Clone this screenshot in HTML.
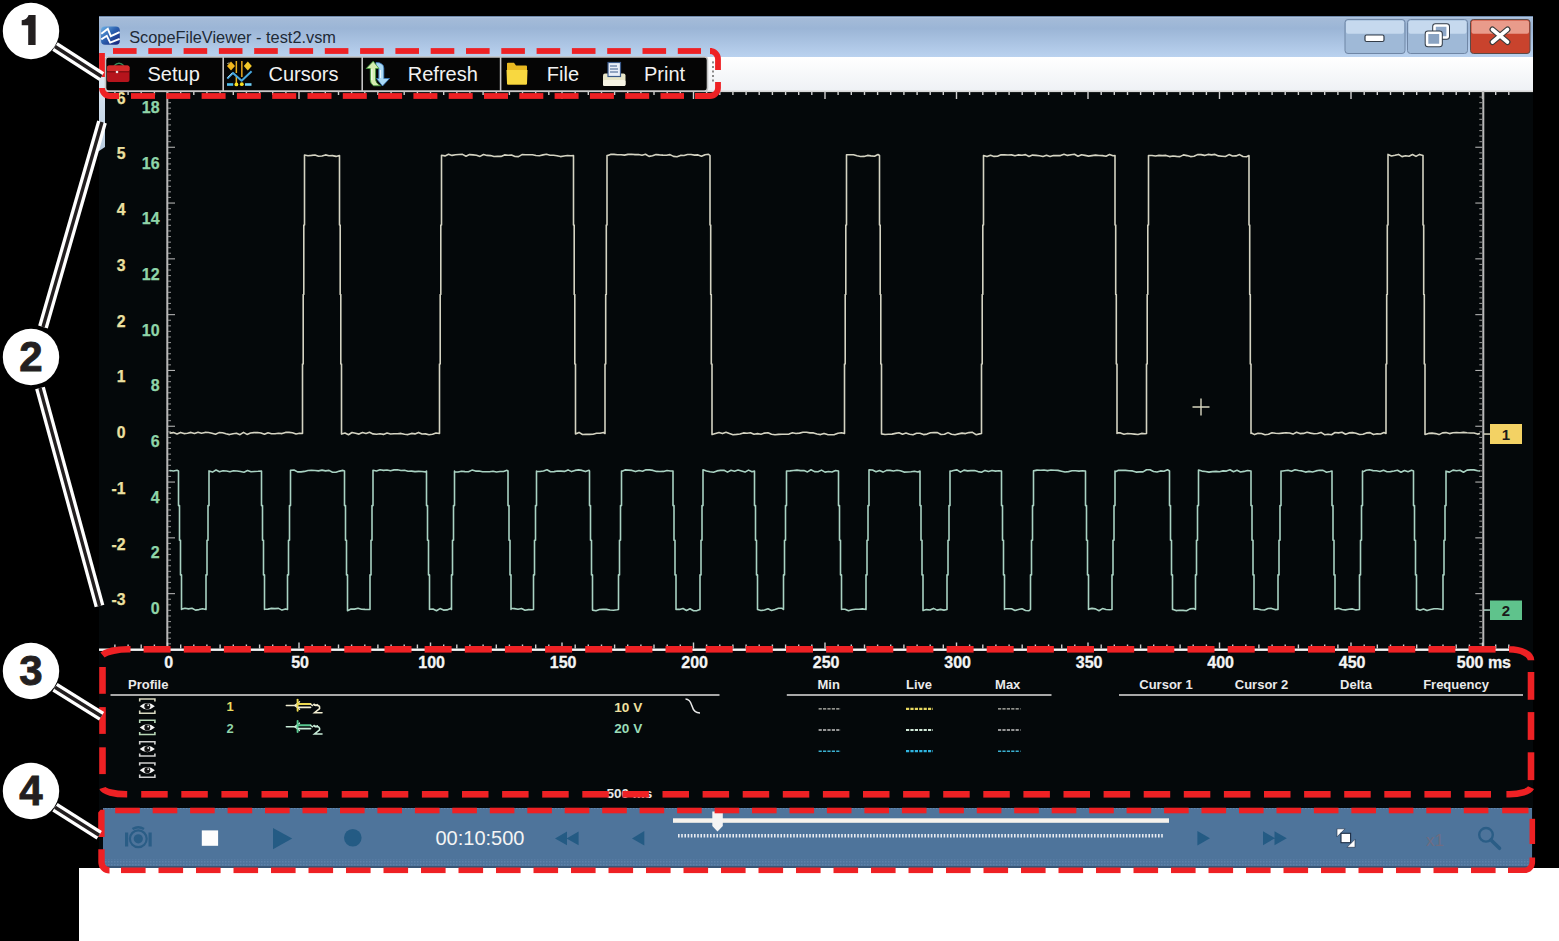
<!DOCTYPE html><html><head><meta charset="utf-8"><style>
html,body{margin:0;padding:0;background:#000;}
body{width:1559px;height:941px;position:relative;overflow:hidden;font-family:"Liberation Sans", sans-serif;}
.a{position:absolute;}
svg text{font-family:"Liberation Sans", sans-serif;}
</style></head><body>
<svg class="a" style="left:0;top:0" width="1559" height="941" viewBox="0 0 1559 941">
<defs>
<linearGradient id="tb" x1="0" y1="0" x2="0" y2="1"><stop offset="0" stop-color="#c2d4ea"/><stop offset="0.06" stop-color="#a4bbd8"/><stop offset="0.3" stop-color="#9bb5d6"/><stop offset="1" stop-color="#bad2ef"/></linearGradient>
<linearGradient id="ms" x1="0" y1="0" x2="0" y2="1"><stop offset="0" stop-color="#ffffff"/><stop offset="1" stop-color="#eef1f5"/></linearGradient>
<linearGradient id="lstrip" x1="0" y1="0" x2="0" y2="1"><stop offset="0" stop-color="#e8f0f8"/><stop offset="1" stop-color="#b8cce0"/></linearGradient>
</defs>
<rect x="0" y="0" width="1559" height="941" fill="#000"/>
<rect x="79" y="868" width="1480" height="73" fill="#fff"/>
<rect x="99" y="57" width="1434" height="811" fill="#04080a"/>
<rect x="99" y="16" width="1434" height="41" fill="url(#tb)"/>
<rect x="99" y="16" width="1434" height="1" fill="#6f89ab"/>
<rect x="99" y="57" width="1434" height="34" fill="url(#ms)"/>
<path d="M99,57 L105,57 L105,147 L99,151 Z" fill="url(#lstrip)"/>
<rect x="105" y="90.5" width="1428" height="1.6" fill="#d8d8d8"/>
<rect x="114.2" y="91" width="1.4" height="4" fill="#cfcfcf"/>
<rect x="127.4" y="91" width="1.4" height="4" fill="#cfcfcf"/>
<rect x="140.5" y="91" width="1.4" height="4" fill="#cfcfcf"/>
<rect x="153.7" y="91" width="1.4" height="4" fill="#cfcfcf"/>
<rect x="166.8" y="91" width="1.4" height="8" fill="#cfcfcf"/>
<rect x="180.0" y="91" width="1.4" height="4" fill="#cfcfcf"/>
<rect x="193.1" y="91" width="1.4" height="4" fill="#cfcfcf"/>
<rect x="206.2" y="91" width="1.4" height="4" fill="#cfcfcf"/>
<rect x="219.4" y="91" width="1.4" height="4" fill="#cfcfcf"/>
<rect x="232.6" y="91" width="1.4" height="4" fill="#cfcfcf"/>
<rect x="245.7" y="91" width="1.4" height="4" fill="#cfcfcf"/>
<rect x="258.9" y="91" width="1.4" height="4" fill="#cfcfcf"/>
<rect x="272.0" y="91" width="1.4" height="4" fill="#cfcfcf"/>
<rect x="285.2" y="91" width="1.4" height="4" fill="#cfcfcf"/>
<rect x="298.3" y="91" width="1.4" height="8" fill="#cfcfcf"/>
<rect x="311.4" y="91" width="1.4" height="4" fill="#cfcfcf"/>
<rect x="324.6" y="91" width="1.4" height="4" fill="#cfcfcf"/>
<rect x="337.8" y="91" width="1.4" height="4" fill="#cfcfcf"/>
<rect x="350.9" y="91" width="1.4" height="4" fill="#cfcfcf"/>
<rect x="364.1" y="91" width="1.4" height="4" fill="#cfcfcf"/>
<rect x="377.2" y="91" width="1.4" height="4" fill="#cfcfcf"/>
<rect x="390.4" y="91" width="1.4" height="4" fill="#cfcfcf"/>
<rect x="403.5" y="91" width="1.4" height="4" fill="#cfcfcf"/>
<rect x="416.7" y="91" width="1.4" height="4" fill="#cfcfcf"/>
<rect x="429.8" y="91" width="1.4" height="8" fill="#cfcfcf"/>
<rect x="443.0" y="91" width="1.4" height="4" fill="#cfcfcf"/>
<rect x="456.1" y="91" width="1.4" height="4" fill="#cfcfcf"/>
<rect x="469.2" y="91" width="1.4" height="4" fill="#cfcfcf"/>
<rect x="482.4" y="91" width="1.4" height="4" fill="#cfcfcf"/>
<rect x="495.6" y="91" width="1.4" height="4" fill="#cfcfcf"/>
<rect x="508.7" y="91" width="1.4" height="4" fill="#cfcfcf"/>
<rect x="521.8" y="91" width="1.4" height="4" fill="#cfcfcf"/>
<rect x="535.0" y="91" width="1.4" height="4" fill="#cfcfcf"/>
<rect x="548.1" y="91" width="1.4" height="4" fill="#cfcfcf"/>
<rect x="561.3" y="91" width="1.4" height="8" fill="#cfcfcf"/>
<rect x="574.5" y="91" width="1.4" height="4" fill="#cfcfcf"/>
<rect x="587.6" y="91" width="1.4" height="4" fill="#cfcfcf"/>
<rect x="600.8" y="91" width="1.4" height="4" fill="#cfcfcf"/>
<rect x="613.9" y="91" width="1.4" height="4" fill="#cfcfcf"/>
<rect x="627.0" y="91" width="1.4" height="4" fill="#cfcfcf"/>
<rect x="640.2" y="91" width="1.4" height="4" fill="#cfcfcf"/>
<rect x="653.3" y="91" width="1.4" height="4" fill="#cfcfcf"/>
<rect x="666.5" y="91" width="1.4" height="4" fill="#cfcfcf"/>
<rect x="679.6" y="91" width="1.4" height="4" fill="#cfcfcf"/>
<rect x="692.8" y="91" width="1.4" height="8" fill="#cfcfcf"/>
<rect x="705.9" y="91" width="1.4" height="4" fill="#cfcfcf"/>
<rect x="719.1" y="91" width="1.4" height="4" fill="#cfcfcf"/>
<rect x="732.2" y="91" width="1.4" height="4" fill="#cfcfcf"/>
<rect x="745.4" y="91" width="1.4" height="4" fill="#cfcfcf"/>
<rect x="758.5" y="91" width="1.4" height="4" fill="#cfcfcf"/>
<rect x="771.7" y="91" width="1.4" height="4" fill="#cfcfcf"/>
<rect x="784.9" y="91" width="1.4" height="4" fill="#cfcfcf"/>
<rect x="798.0" y="91" width="1.4" height="4" fill="#cfcfcf"/>
<rect x="811.1" y="91" width="1.4" height="4" fill="#cfcfcf"/>
<rect x="824.3" y="91" width="1.4" height="8" fill="#cfcfcf"/>
<rect x="837.4" y="91" width="1.4" height="4" fill="#cfcfcf"/>
<rect x="850.6" y="91" width="1.4" height="4" fill="#cfcfcf"/>
<rect x="863.8" y="91" width="1.4" height="4" fill="#cfcfcf"/>
<rect x="876.9" y="91" width="1.4" height="4" fill="#cfcfcf"/>
<rect x="890.0" y="91" width="1.4" height="4" fill="#cfcfcf"/>
<rect x="903.2" y="91" width="1.4" height="4" fill="#cfcfcf"/>
<rect x="916.4" y="91" width="1.4" height="4" fill="#cfcfcf"/>
<rect x="929.5" y="91" width="1.4" height="4" fill="#cfcfcf"/>
<rect x="942.6" y="91" width="1.4" height="4" fill="#cfcfcf"/>
<rect x="955.8" y="91" width="1.4" height="8" fill="#cfcfcf"/>
<rect x="968.9" y="91" width="1.4" height="4" fill="#cfcfcf"/>
<rect x="982.1" y="91" width="1.4" height="4" fill="#cfcfcf"/>
<rect x="995.2" y="91" width="1.4" height="4" fill="#cfcfcf"/>
<rect x="1008.4" y="91" width="1.4" height="4" fill="#cfcfcf"/>
<rect x="1021.5" y="91" width="1.4" height="4" fill="#cfcfcf"/>
<rect x="1034.7" y="91" width="1.4" height="4" fill="#cfcfcf"/>
<rect x="1047.9" y="91" width="1.4" height="4" fill="#cfcfcf"/>
<rect x="1061.0" y="91" width="1.4" height="4" fill="#cfcfcf"/>
<rect x="1074.1" y="91" width="1.4" height="4" fill="#cfcfcf"/>
<rect x="1087.3" y="91" width="1.4" height="8" fill="#cfcfcf"/>
<rect x="1100.5" y="91" width="1.4" height="4" fill="#cfcfcf"/>
<rect x="1113.6" y="91" width="1.4" height="4" fill="#cfcfcf"/>
<rect x="1126.8" y="91" width="1.4" height="4" fill="#cfcfcf"/>
<rect x="1139.9" y="91" width="1.4" height="4" fill="#cfcfcf"/>
<rect x="1153.0" y="91" width="1.4" height="4" fill="#cfcfcf"/>
<rect x="1166.2" y="91" width="1.4" height="4" fill="#cfcfcf"/>
<rect x="1179.4" y="91" width="1.4" height="4" fill="#cfcfcf"/>
<rect x="1192.5" y="91" width="1.4" height="4" fill="#cfcfcf"/>
<rect x="1205.7" y="91" width="1.4" height="4" fill="#cfcfcf"/>
<rect x="1218.8" y="91" width="1.4" height="8" fill="#cfcfcf"/>
<rect x="1232.0" y="91" width="1.4" height="4" fill="#cfcfcf"/>
<rect x="1245.1" y="91" width="1.4" height="4" fill="#cfcfcf"/>
<rect x="1258.2" y="91" width="1.4" height="4" fill="#cfcfcf"/>
<rect x="1271.4" y="91" width="1.4" height="4" fill="#cfcfcf"/>
<rect x="1284.5" y="91" width="1.4" height="4" fill="#cfcfcf"/>
<rect x="1297.7" y="91" width="1.4" height="4" fill="#cfcfcf"/>
<rect x="1310.8" y="91" width="1.4" height="4" fill="#cfcfcf"/>
<rect x="1324.0" y="91" width="1.4" height="4" fill="#cfcfcf"/>
<rect x="1337.2" y="91" width="1.4" height="4" fill="#cfcfcf"/>
<rect x="1350.3" y="91" width="1.4" height="8" fill="#cfcfcf"/>
<rect x="1363.5" y="91" width="1.4" height="4" fill="#cfcfcf"/>
<rect x="1376.6" y="91" width="1.4" height="4" fill="#cfcfcf"/>
<rect x="1389.8" y="91" width="1.4" height="4" fill="#cfcfcf"/>
<rect x="1402.9" y="91" width="1.4" height="4" fill="#cfcfcf"/>
<rect x="1416.0" y="91" width="1.4" height="4" fill="#cfcfcf"/>
<rect x="1429.2" y="91" width="1.4" height="4" fill="#cfcfcf"/>
<rect x="1442.3" y="91" width="1.4" height="4" fill="#cfcfcf"/>
<rect x="1455.5" y="91" width="1.4" height="4" fill="#cfcfcf"/>
<rect x="1468.7" y="91" width="1.4" height="4" fill="#cfcfcf"/>
<rect x="1481.8" y="91" width="1.4" height="8" fill="#cfcfcf"/>
<rect x="1495.0" y="91" width="1.4" height="4" fill="#cfcfcf"/>
<rect x="1508.1" y="91" width="1.4" height="4" fill="#cfcfcf"/>
<rect x="166.3" y="91" width="2" height="556" fill="#b9b9b9"/>
<rect x="1482.3" y="91" width="2" height="556" fill="#b9b9b9"/>
<rect x="168" y="96.5" width="3" height="1.1" fill="#8a8a8a"/>
<rect x="1479.3" y="96.5" width="3" height="1.1" fill="#8a8a8a"/>
<rect x="168" y="102.1" width="3" height="1.1" fill="#8a8a8a"/>
<rect x="1479.3" y="102.1" width="3" height="1.1" fill="#8a8a8a"/>
<rect x="168" y="107.6" width="3" height="1.1" fill="#8a8a8a"/>
<rect x="1479.3" y="107.6" width="3" height="1.1" fill="#8a8a8a"/>
<rect x="168" y="113.2" width="3" height="1.1" fill="#8a8a8a"/>
<rect x="1479.3" y="113.2" width="3" height="1.1" fill="#8a8a8a"/>
<rect x="168" y="118.8" width="3" height="1.1" fill="#8a8a8a"/>
<rect x="1479.3" y="118.8" width="3" height="1.1" fill="#8a8a8a"/>
<rect x="168" y="124.4" width="3" height="1.1" fill="#8a8a8a"/>
<rect x="1479.3" y="124.4" width="3" height="1.1" fill="#8a8a8a"/>
<rect x="168" y="130.0" width="3" height="1.1" fill="#8a8a8a"/>
<rect x="1479.3" y="130.0" width="3" height="1.1" fill="#8a8a8a"/>
<rect x="168" y="135.5" width="3" height="1.1" fill="#8a8a8a"/>
<rect x="1479.3" y="135.5" width="3" height="1.1" fill="#8a8a8a"/>
<rect x="168" y="141.1" width="3" height="1.1" fill="#8a8a8a"/>
<rect x="1479.3" y="141.1" width="3" height="1.1" fill="#8a8a8a"/>
<rect x="168" y="146.7" width="7" height="1.1" fill="#b0b0b0"/>
<rect x="1475.3" y="146.7" width="7" height="1.1" fill="#b0b0b0"/>
<rect x="168" y="152.3" width="3" height="1.1" fill="#8a8a8a"/>
<rect x="1479.3" y="152.3" width="3" height="1.1" fill="#8a8a8a"/>
<rect x="168" y="157.9" width="3" height="1.1" fill="#8a8a8a"/>
<rect x="1479.3" y="157.9" width="3" height="1.1" fill="#8a8a8a"/>
<rect x="168" y="163.4" width="3" height="1.1" fill="#8a8a8a"/>
<rect x="1479.3" y="163.4" width="3" height="1.1" fill="#8a8a8a"/>
<rect x="168" y="169.0" width="3" height="1.1" fill="#8a8a8a"/>
<rect x="1479.3" y="169.0" width="3" height="1.1" fill="#8a8a8a"/>
<rect x="168" y="174.6" width="3" height="1.1" fill="#8a8a8a"/>
<rect x="1479.3" y="174.6" width="3" height="1.1" fill="#8a8a8a"/>
<rect x="168" y="180.2" width="3" height="1.1" fill="#8a8a8a"/>
<rect x="1479.3" y="180.2" width="3" height="1.1" fill="#8a8a8a"/>
<rect x="168" y="185.8" width="3" height="1.1" fill="#8a8a8a"/>
<rect x="1479.3" y="185.8" width="3" height="1.1" fill="#8a8a8a"/>
<rect x="168" y="191.3" width="3" height="1.1" fill="#8a8a8a"/>
<rect x="1479.3" y="191.3" width="3" height="1.1" fill="#8a8a8a"/>
<rect x="168" y="196.9" width="3" height="1.1" fill="#8a8a8a"/>
<rect x="1479.3" y="196.9" width="3" height="1.1" fill="#8a8a8a"/>
<rect x="168" y="202.5" width="7" height="1.1" fill="#b0b0b0"/>
<rect x="1475.3" y="202.5" width="7" height="1.1" fill="#b0b0b0"/>
<rect x="168" y="208.1" width="3" height="1.1" fill="#8a8a8a"/>
<rect x="1479.3" y="208.1" width="3" height="1.1" fill="#8a8a8a"/>
<rect x="168" y="213.7" width="3" height="1.1" fill="#8a8a8a"/>
<rect x="1479.3" y="213.7" width="3" height="1.1" fill="#8a8a8a"/>
<rect x="168" y="219.2" width="3" height="1.1" fill="#8a8a8a"/>
<rect x="1479.3" y="219.2" width="3" height="1.1" fill="#8a8a8a"/>
<rect x="168" y="224.8" width="3" height="1.1" fill="#8a8a8a"/>
<rect x="1479.3" y="224.8" width="3" height="1.1" fill="#8a8a8a"/>
<rect x="168" y="230.4" width="3" height="1.1" fill="#8a8a8a"/>
<rect x="1479.3" y="230.4" width="3" height="1.1" fill="#8a8a8a"/>
<rect x="168" y="236.0" width="3" height="1.1" fill="#8a8a8a"/>
<rect x="1479.3" y="236.0" width="3" height="1.1" fill="#8a8a8a"/>
<rect x="168" y="241.6" width="3" height="1.1" fill="#8a8a8a"/>
<rect x="1479.3" y="241.6" width="3" height="1.1" fill="#8a8a8a"/>
<rect x="168" y="247.1" width="3" height="1.1" fill="#8a8a8a"/>
<rect x="1479.3" y="247.1" width="3" height="1.1" fill="#8a8a8a"/>
<rect x="168" y="252.7" width="3" height="1.1" fill="#8a8a8a"/>
<rect x="1479.3" y="252.7" width="3" height="1.1" fill="#8a8a8a"/>
<rect x="168" y="258.3" width="7" height="1.1" fill="#b0b0b0"/>
<rect x="1475.3" y="258.3" width="7" height="1.1" fill="#b0b0b0"/>
<rect x="168" y="263.9" width="3" height="1.1" fill="#8a8a8a"/>
<rect x="1479.3" y="263.9" width="3" height="1.1" fill="#8a8a8a"/>
<rect x="168" y="269.5" width="3" height="1.1" fill="#8a8a8a"/>
<rect x="1479.3" y="269.5" width="3" height="1.1" fill="#8a8a8a"/>
<rect x="168" y="275.0" width="3" height="1.1" fill="#8a8a8a"/>
<rect x="1479.3" y="275.0" width="3" height="1.1" fill="#8a8a8a"/>
<rect x="168" y="280.6" width="3" height="1.1" fill="#8a8a8a"/>
<rect x="1479.3" y="280.6" width="3" height="1.1" fill="#8a8a8a"/>
<rect x="168" y="286.2" width="3" height="1.1" fill="#8a8a8a"/>
<rect x="1479.3" y="286.2" width="3" height="1.1" fill="#8a8a8a"/>
<rect x="168" y="291.8" width="3" height="1.1" fill="#8a8a8a"/>
<rect x="1479.3" y="291.8" width="3" height="1.1" fill="#8a8a8a"/>
<rect x="168" y="297.4" width="3" height="1.1" fill="#8a8a8a"/>
<rect x="1479.3" y="297.4" width="3" height="1.1" fill="#8a8a8a"/>
<rect x="168" y="302.9" width="3" height="1.1" fill="#8a8a8a"/>
<rect x="1479.3" y="302.9" width="3" height="1.1" fill="#8a8a8a"/>
<rect x="168" y="308.5" width="3" height="1.1" fill="#8a8a8a"/>
<rect x="1479.3" y="308.5" width="3" height="1.1" fill="#8a8a8a"/>
<rect x="168" y="314.1" width="7" height="1.1" fill="#b0b0b0"/>
<rect x="1475.3" y="314.1" width="7" height="1.1" fill="#b0b0b0"/>
<rect x="168" y="319.7" width="3" height="1.1" fill="#8a8a8a"/>
<rect x="1479.3" y="319.7" width="3" height="1.1" fill="#8a8a8a"/>
<rect x="168" y="325.3" width="3" height="1.1" fill="#8a8a8a"/>
<rect x="1479.3" y="325.3" width="3" height="1.1" fill="#8a8a8a"/>
<rect x="168" y="330.8" width="3" height="1.1" fill="#8a8a8a"/>
<rect x="1479.3" y="330.8" width="3" height="1.1" fill="#8a8a8a"/>
<rect x="168" y="336.4" width="3" height="1.1" fill="#8a8a8a"/>
<rect x="1479.3" y="336.4" width="3" height="1.1" fill="#8a8a8a"/>
<rect x="168" y="342.0" width="3" height="1.1" fill="#8a8a8a"/>
<rect x="1479.3" y="342.0" width="3" height="1.1" fill="#8a8a8a"/>
<rect x="168" y="347.6" width="3" height="1.1" fill="#8a8a8a"/>
<rect x="1479.3" y="347.6" width="3" height="1.1" fill="#8a8a8a"/>
<rect x="168" y="353.2" width="3" height="1.1" fill="#8a8a8a"/>
<rect x="1479.3" y="353.2" width="3" height="1.1" fill="#8a8a8a"/>
<rect x="168" y="358.7" width="3" height="1.1" fill="#8a8a8a"/>
<rect x="1479.3" y="358.7" width="3" height="1.1" fill="#8a8a8a"/>
<rect x="168" y="364.3" width="3" height="1.1" fill="#8a8a8a"/>
<rect x="1479.3" y="364.3" width="3" height="1.1" fill="#8a8a8a"/>
<rect x="168" y="369.9" width="7" height="1.1" fill="#b0b0b0"/>
<rect x="1475.3" y="369.9" width="7" height="1.1" fill="#b0b0b0"/>
<rect x="168" y="375.5" width="3" height="1.1" fill="#8a8a8a"/>
<rect x="1479.3" y="375.5" width="3" height="1.1" fill="#8a8a8a"/>
<rect x="168" y="381.1" width="3" height="1.1" fill="#8a8a8a"/>
<rect x="1479.3" y="381.1" width="3" height="1.1" fill="#8a8a8a"/>
<rect x="168" y="386.6" width="3" height="1.1" fill="#8a8a8a"/>
<rect x="1479.3" y="386.6" width="3" height="1.1" fill="#8a8a8a"/>
<rect x="168" y="392.2" width="3" height="1.1" fill="#8a8a8a"/>
<rect x="1479.3" y="392.2" width="3" height="1.1" fill="#8a8a8a"/>
<rect x="168" y="397.8" width="3" height="1.1" fill="#8a8a8a"/>
<rect x="1479.3" y="397.8" width="3" height="1.1" fill="#8a8a8a"/>
<rect x="168" y="403.4" width="3" height="1.1" fill="#8a8a8a"/>
<rect x="1479.3" y="403.4" width="3" height="1.1" fill="#8a8a8a"/>
<rect x="168" y="409.0" width="3" height="1.1" fill="#8a8a8a"/>
<rect x="1479.3" y="409.0" width="3" height="1.1" fill="#8a8a8a"/>
<rect x="168" y="414.5" width="3" height="1.1" fill="#8a8a8a"/>
<rect x="1479.3" y="414.5" width="3" height="1.1" fill="#8a8a8a"/>
<rect x="168" y="420.1" width="3" height="1.1" fill="#8a8a8a"/>
<rect x="1479.3" y="420.1" width="3" height="1.1" fill="#8a8a8a"/>
<rect x="168" y="425.7" width="7" height="1.1" fill="#b0b0b0"/>
<rect x="1475.3" y="425.7" width="7" height="1.1" fill="#b0b0b0"/>
<rect x="168" y="431.3" width="3" height="1.1" fill="#8a8a8a"/>
<rect x="1479.3" y="431.3" width="3" height="1.1" fill="#8a8a8a"/>
<rect x="168" y="436.9" width="3" height="1.1" fill="#8a8a8a"/>
<rect x="1479.3" y="436.9" width="3" height="1.1" fill="#8a8a8a"/>
<rect x="168" y="442.4" width="3" height="1.1" fill="#8a8a8a"/>
<rect x="1479.3" y="442.4" width="3" height="1.1" fill="#8a8a8a"/>
<rect x="168" y="448.0" width="3" height="1.1" fill="#8a8a8a"/>
<rect x="1479.3" y="448.0" width="3" height="1.1" fill="#8a8a8a"/>
<rect x="168" y="453.6" width="3" height="1.1" fill="#8a8a8a"/>
<rect x="1479.3" y="453.6" width="3" height="1.1" fill="#8a8a8a"/>
<rect x="168" y="459.2" width="3" height="1.1" fill="#8a8a8a"/>
<rect x="1479.3" y="459.2" width="3" height="1.1" fill="#8a8a8a"/>
<rect x="168" y="464.8" width="3" height="1.1" fill="#8a8a8a"/>
<rect x="1479.3" y="464.8" width="3" height="1.1" fill="#8a8a8a"/>
<rect x="168" y="470.3" width="3" height="1.1" fill="#8a8a8a"/>
<rect x="1479.3" y="470.3" width="3" height="1.1" fill="#8a8a8a"/>
<rect x="168" y="475.9" width="3" height="1.1" fill="#8a8a8a"/>
<rect x="1479.3" y="475.9" width="3" height="1.1" fill="#8a8a8a"/>
<rect x="168" y="481.5" width="7" height="1.1" fill="#b0b0b0"/>
<rect x="1475.3" y="481.5" width="7" height="1.1" fill="#b0b0b0"/>
<rect x="168" y="487.1" width="3" height="1.1" fill="#8a8a8a"/>
<rect x="1479.3" y="487.1" width="3" height="1.1" fill="#8a8a8a"/>
<rect x="168" y="492.7" width="3" height="1.1" fill="#8a8a8a"/>
<rect x="1479.3" y="492.7" width="3" height="1.1" fill="#8a8a8a"/>
<rect x="168" y="498.2" width="3" height="1.1" fill="#8a8a8a"/>
<rect x="1479.3" y="498.2" width="3" height="1.1" fill="#8a8a8a"/>
<rect x="168" y="503.8" width="3" height="1.1" fill="#8a8a8a"/>
<rect x="1479.3" y="503.8" width="3" height="1.1" fill="#8a8a8a"/>
<rect x="168" y="509.4" width="3" height="1.1" fill="#8a8a8a"/>
<rect x="1479.3" y="509.4" width="3" height="1.1" fill="#8a8a8a"/>
<rect x="168" y="515.0" width="3" height="1.1" fill="#8a8a8a"/>
<rect x="1479.3" y="515.0" width="3" height="1.1" fill="#8a8a8a"/>
<rect x="168" y="520.6" width="3" height="1.1" fill="#8a8a8a"/>
<rect x="1479.3" y="520.6" width="3" height="1.1" fill="#8a8a8a"/>
<rect x="168" y="526.1" width="3" height="1.1" fill="#8a8a8a"/>
<rect x="1479.3" y="526.1" width="3" height="1.1" fill="#8a8a8a"/>
<rect x="168" y="531.7" width="3" height="1.1" fill="#8a8a8a"/>
<rect x="1479.3" y="531.7" width="3" height="1.1" fill="#8a8a8a"/>
<rect x="168" y="537.3" width="7" height="1.1" fill="#b0b0b0"/>
<rect x="1475.3" y="537.3" width="7" height="1.1" fill="#b0b0b0"/>
<rect x="168" y="542.9" width="3" height="1.1" fill="#8a8a8a"/>
<rect x="1479.3" y="542.9" width="3" height="1.1" fill="#8a8a8a"/>
<rect x="168" y="548.5" width="3" height="1.1" fill="#8a8a8a"/>
<rect x="1479.3" y="548.5" width="3" height="1.1" fill="#8a8a8a"/>
<rect x="168" y="554.0" width="3" height="1.1" fill="#8a8a8a"/>
<rect x="1479.3" y="554.0" width="3" height="1.1" fill="#8a8a8a"/>
<rect x="168" y="559.6" width="3" height="1.1" fill="#8a8a8a"/>
<rect x="1479.3" y="559.6" width="3" height="1.1" fill="#8a8a8a"/>
<rect x="168" y="565.2" width="3" height="1.1" fill="#8a8a8a"/>
<rect x="1479.3" y="565.2" width="3" height="1.1" fill="#8a8a8a"/>
<rect x="168" y="570.8" width="3" height="1.1" fill="#8a8a8a"/>
<rect x="1479.3" y="570.8" width="3" height="1.1" fill="#8a8a8a"/>
<rect x="168" y="576.4" width="3" height="1.1" fill="#8a8a8a"/>
<rect x="1479.3" y="576.4" width="3" height="1.1" fill="#8a8a8a"/>
<rect x="168" y="581.9" width="3" height="1.1" fill="#8a8a8a"/>
<rect x="1479.3" y="581.9" width="3" height="1.1" fill="#8a8a8a"/>
<rect x="168" y="587.5" width="3" height="1.1" fill="#8a8a8a"/>
<rect x="1479.3" y="587.5" width="3" height="1.1" fill="#8a8a8a"/>
<rect x="168" y="593.1" width="7" height="1.1" fill="#b0b0b0"/>
<rect x="1475.3" y="593.1" width="7" height="1.1" fill="#b0b0b0"/>
<rect x="168" y="598.7" width="3" height="1.1" fill="#8a8a8a"/>
<rect x="1479.3" y="598.7" width="3" height="1.1" fill="#8a8a8a"/>
<rect x="168" y="604.3" width="3" height="1.1" fill="#8a8a8a"/>
<rect x="1479.3" y="604.3" width="3" height="1.1" fill="#8a8a8a"/>
<rect x="168" y="609.8" width="3" height="1.1" fill="#8a8a8a"/>
<rect x="1479.3" y="609.8" width="3" height="1.1" fill="#8a8a8a"/>
<rect x="168" y="615.4" width="3" height="1.1" fill="#8a8a8a"/>
<rect x="1479.3" y="615.4" width="3" height="1.1" fill="#8a8a8a"/>
<rect x="168" y="621.0" width="3" height="1.1" fill="#8a8a8a"/>
<rect x="1479.3" y="621.0" width="3" height="1.1" fill="#8a8a8a"/>
<rect x="168" y="626.6" width="3" height="1.1" fill="#8a8a8a"/>
<rect x="1479.3" y="626.6" width="3" height="1.1" fill="#8a8a8a"/>
<rect x="168" y="632.2" width="3" height="1.1" fill="#8a8a8a"/>
<rect x="1479.3" y="632.2" width="3" height="1.1" fill="#8a8a8a"/>
<rect x="168" y="637.7" width="3" height="1.1" fill="#8a8a8a"/>
<rect x="1479.3" y="637.7" width="3" height="1.1" fill="#8a8a8a"/>
<rect x="168" y="643.3" width="3" height="1.1" fill="#8a8a8a"/>
<rect x="1479.3" y="643.3" width="3" height="1.1" fill="#8a8a8a"/>
<rect x="99" y="648.5" width="1411" height="2.4" fill="#f4f4f4"/>
<rect x="114.2" y="644.5" width="1.4" height="4" fill="#cfcfcf"/>
<rect x="127.4" y="644.5" width="1.4" height="4" fill="#cfcfcf"/>
<rect x="140.5" y="644.5" width="1.4" height="4" fill="#cfcfcf"/>
<rect x="153.7" y="644.5" width="1.4" height="4" fill="#cfcfcf"/>
<rect x="166.8" y="642.5" width="1.4" height="6" fill="#cfcfcf"/>
<rect x="180.0" y="644.5" width="1.4" height="4" fill="#cfcfcf"/>
<rect x="193.1" y="644.5" width="1.4" height="4" fill="#cfcfcf"/>
<rect x="206.2" y="644.5" width="1.4" height="4" fill="#cfcfcf"/>
<rect x="219.4" y="644.5" width="1.4" height="4" fill="#cfcfcf"/>
<rect x="232.6" y="644.5" width="1.4" height="4" fill="#cfcfcf"/>
<rect x="245.7" y="644.5" width="1.4" height="4" fill="#cfcfcf"/>
<rect x="258.9" y="644.5" width="1.4" height="4" fill="#cfcfcf"/>
<rect x="272.0" y="644.5" width="1.4" height="4" fill="#cfcfcf"/>
<rect x="285.2" y="644.5" width="1.4" height="4" fill="#cfcfcf"/>
<rect x="298.3" y="642.5" width="1.4" height="6" fill="#cfcfcf"/>
<rect x="311.4" y="644.5" width="1.4" height="4" fill="#cfcfcf"/>
<rect x="324.6" y="644.5" width="1.4" height="4" fill="#cfcfcf"/>
<rect x="337.8" y="644.5" width="1.4" height="4" fill="#cfcfcf"/>
<rect x="350.9" y="644.5" width="1.4" height="4" fill="#cfcfcf"/>
<rect x="364.1" y="644.5" width="1.4" height="4" fill="#cfcfcf"/>
<rect x="377.2" y="644.5" width="1.4" height="4" fill="#cfcfcf"/>
<rect x="390.4" y="644.5" width="1.4" height="4" fill="#cfcfcf"/>
<rect x="403.5" y="644.5" width="1.4" height="4" fill="#cfcfcf"/>
<rect x="416.7" y="644.5" width="1.4" height="4" fill="#cfcfcf"/>
<rect x="429.8" y="642.5" width="1.4" height="6" fill="#cfcfcf"/>
<rect x="443.0" y="644.5" width="1.4" height="4" fill="#cfcfcf"/>
<rect x="456.1" y="644.5" width="1.4" height="4" fill="#cfcfcf"/>
<rect x="469.2" y="644.5" width="1.4" height="4" fill="#cfcfcf"/>
<rect x="482.4" y="644.5" width="1.4" height="4" fill="#cfcfcf"/>
<rect x="495.6" y="644.5" width="1.4" height="4" fill="#cfcfcf"/>
<rect x="508.7" y="644.5" width="1.4" height="4" fill="#cfcfcf"/>
<rect x="521.8" y="644.5" width="1.4" height="4" fill="#cfcfcf"/>
<rect x="535.0" y="644.5" width="1.4" height="4" fill="#cfcfcf"/>
<rect x="548.1" y="644.5" width="1.4" height="4" fill="#cfcfcf"/>
<rect x="561.3" y="642.5" width="1.4" height="6" fill="#cfcfcf"/>
<rect x="574.5" y="644.5" width="1.4" height="4" fill="#cfcfcf"/>
<rect x="587.6" y="644.5" width="1.4" height="4" fill="#cfcfcf"/>
<rect x="600.8" y="644.5" width="1.4" height="4" fill="#cfcfcf"/>
<rect x="613.9" y="644.5" width="1.4" height="4" fill="#cfcfcf"/>
<rect x="627.0" y="644.5" width="1.4" height="4" fill="#cfcfcf"/>
<rect x="640.2" y="644.5" width="1.4" height="4" fill="#cfcfcf"/>
<rect x="653.3" y="644.5" width="1.4" height="4" fill="#cfcfcf"/>
<rect x="666.5" y="644.5" width="1.4" height="4" fill="#cfcfcf"/>
<rect x="679.6" y="644.5" width="1.4" height="4" fill="#cfcfcf"/>
<rect x="692.8" y="642.5" width="1.4" height="6" fill="#cfcfcf"/>
<rect x="705.9" y="644.5" width="1.4" height="4" fill="#cfcfcf"/>
<rect x="719.1" y="644.5" width="1.4" height="4" fill="#cfcfcf"/>
<rect x="732.2" y="644.5" width="1.4" height="4" fill="#cfcfcf"/>
<rect x="745.4" y="644.5" width="1.4" height="4" fill="#cfcfcf"/>
<rect x="758.5" y="644.5" width="1.4" height="4" fill="#cfcfcf"/>
<rect x="771.7" y="644.5" width="1.4" height="4" fill="#cfcfcf"/>
<rect x="784.9" y="644.5" width="1.4" height="4" fill="#cfcfcf"/>
<rect x="798.0" y="644.5" width="1.4" height="4" fill="#cfcfcf"/>
<rect x="811.1" y="644.5" width="1.4" height="4" fill="#cfcfcf"/>
<rect x="824.3" y="642.5" width="1.4" height="6" fill="#cfcfcf"/>
<rect x="837.4" y="644.5" width="1.4" height="4" fill="#cfcfcf"/>
<rect x="850.6" y="644.5" width="1.4" height="4" fill="#cfcfcf"/>
<rect x="863.8" y="644.5" width="1.4" height="4" fill="#cfcfcf"/>
<rect x="876.9" y="644.5" width="1.4" height="4" fill="#cfcfcf"/>
<rect x="890.0" y="644.5" width="1.4" height="4" fill="#cfcfcf"/>
<rect x="903.2" y="644.5" width="1.4" height="4" fill="#cfcfcf"/>
<rect x="916.4" y="644.5" width="1.4" height="4" fill="#cfcfcf"/>
<rect x="929.5" y="644.5" width="1.4" height="4" fill="#cfcfcf"/>
<rect x="942.6" y="644.5" width="1.4" height="4" fill="#cfcfcf"/>
<rect x="955.8" y="642.5" width="1.4" height="6" fill="#cfcfcf"/>
<rect x="968.9" y="644.5" width="1.4" height="4" fill="#cfcfcf"/>
<rect x="982.1" y="644.5" width="1.4" height="4" fill="#cfcfcf"/>
<rect x="995.2" y="644.5" width="1.4" height="4" fill="#cfcfcf"/>
<rect x="1008.4" y="644.5" width="1.4" height="4" fill="#cfcfcf"/>
<rect x="1021.5" y="644.5" width="1.4" height="4" fill="#cfcfcf"/>
<rect x="1034.7" y="644.5" width="1.4" height="4" fill="#cfcfcf"/>
<rect x="1047.9" y="644.5" width="1.4" height="4" fill="#cfcfcf"/>
<rect x="1061.0" y="644.5" width="1.4" height="4" fill="#cfcfcf"/>
<rect x="1074.1" y="644.5" width="1.4" height="4" fill="#cfcfcf"/>
<rect x="1087.3" y="642.5" width="1.4" height="6" fill="#cfcfcf"/>
<rect x="1100.5" y="644.5" width="1.4" height="4" fill="#cfcfcf"/>
<rect x="1113.6" y="644.5" width="1.4" height="4" fill="#cfcfcf"/>
<rect x="1126.8" y="644.5" width="1.4" height="4" fill="#cfcfcf"/>
<rect x="1139.9" y="644.5" width="1.4" height="4" fill="#cfcfcf"/>
<rect x="1153.0" y="644.5" width="1.4" height="4" fill="#cfcfcf"/>
<rect x="1166.2" y="644.5" width="1.4" height="4" fill="#cfcfcf"/>
<rect x="1179.4" y="644.5" width="1.4" height="4" fill="#cfcfcf"/>
<rect x="1192.5" y="644.5" width="1.4" height="4" fill="#cfcfcf"/>
<rect x="1205.7" y="644.5" width="1.4" height="4" fill="#cfcfcf"/>
<rect x="1218.8" y="642.5" width="1.4" height="6" fill="#cfcfcf"/>
<rect x="1232.0" y="644.5" width="1.4" height="4" fill="#cfcfcf"/>
<rect x="1245.1" y="644.5" width="1.4" height="4" fill="#cfcfcf"/>
<rect x="1258.2" y="644.5" width="1.4" height="4" fill="#cfcfcf"/>
<rect x="1271.4" y="644.5" width="1.4" height="4" fill="#cfcfcf"/>
<rect x="1284.5" y="644.5" width="1.4" height="4" fill="#cfcfcf"/>
<rect x="1297.7" y="644.5" width="1.4" height="4" fill="#cfcfcf"/>
<rect x="1310.8" y="644.5" width="1.4" height="4" fill="#cfcfcf"/>
<rect x="1324.0" y="644.5" width="1.4" height="4" fill="#cfcfcf"/>
<rect x="1337.2" y="644.5" width="1.4" height="4" fill="#cfcfcf"/>
<rect x="1350.3" y="642.5" width="1.4" height="6" fill="#cfcfcf"/>
<rect x="1363.5" y="644.5" width="1.4" height="4" fill="#cfcfcf"/>
<rect x="1376.6" y="644.5" width="1.4" height="4" fill="#cfcfcf"/>
<rect x="1389.8" y="644.5" width="1.4" height="4" fill="#cfcfcf"/>
<rect x="1402.9" y="644.5" width="1.4" height="4" fill="#cfcfcf"/>
<rect x="1416.0" y="644.5" width="1.4" height="4" fill="#cfcfcf"/>
<rect x="1429.2" y="644.5" width="1.4" height="4" fill="#cfcfcf"/>
<rect x="1442.3" y="644.5" width="1.4" height="4" fill="#cfcfcf"/>
<rect x="1455.5" y="644.5" width="1.4" height="4" fill="#cfcfcf"/>
<rect x="1468.7" y="644.5" width="1.4" height="4" fill="#cfcfcf"/>
<rect x="1481.8" y="642.5" width="1.4" height="6" fill="#cfcfcf"/>
<rect x="1495.0" y="644.5" width="1.4" height="4" fill="#cfcfcf"/>
<rect x="1508.1" y="644.5" width="1.4" height="4" fill="#cfcfcf"/>
<path d="M170.0,433.5 L170.0,433.1 L173.5,432.6 L177.0,433.9 L180.5,432.4 L184.0,433.6 L187.5,433.2 L191.0,432.4 L194.5,433.5 L198.0,432.3 L201.5,433.3 L205.0,432.4 L208.5,432.5 L212.0,433.3 L215.5,434.3 L219.0,432.6 L222.5,432.8 L226.0,433.8 L229.5,434.6 L233.0,433.7 L236.5,433.2 L240.0,434.7 L243.5,432.4 L247.0,434.4 L250.5,433.0 L254.0,432.6 L257.5,432.5 L261.0,433.0 L264.5,434.3 L268.0,432.7 L271.5,433.7 L275.0,433.8 L278.5,433.2 L282.0,433.6 L285.5,432.4 L289.0,432.4 L292.5,432.8 L296.0,434.0 L299.5,433.3 L302.5,433.5 L302.5,433.5 L302.5,364.0 L303.2,364.0 L303.2,294.5 L303.8,294.5 L303.8,225.0 L304.5,225.0 L304.5,155.5 L304.5,155.0 L308.0,155.7 L311.5,155.4 L315.0,155.0 L318.5,156.2 L322.0,156.0 L325.5,154.9 L329.0,155.7 L332.5,155.6 L336.0,156.4 L339.5,155.5 L339.5,155.5 L339.5,225.0 L340.2,225.0 L340.2,294.5 L340.8,294.5 L340.8,364.0 L341.5,364.0 L341.5,433.5 L341.5,434.1 L345.0,433.0 L348.5,434.7 L352.0,432.5 L355.5,433.3 L359.0,434.1 L362.5,432.6 L366.0,433.5 L369.5,432.3 L373.0,433.9 L376.5,434.2 L380.0,433.7 L383.5,434.4 L387.0,433.0 L390.5,434.0 L394.0,433.7 L397.5,433.7 L401.0,433.4 L404.5,434.3 L408.0,434.6 L411.5,433.4 L415.0,433.9 L418.5,432.4 L422.0,434.0 L425.5,433.9 L429.0,434.7 L432.5,434.3 L436.0,433.0 L439.5,433.5 L439.5,433.5 L439.5,364.0 L440.2,364.0 L440.2,294.5 L440.8,294.5 L440.8,225.0 L441.5,225.0 L441.5,155.5 L441.5,155.2 L445.0,155.9 L448.5,154.3 L452.0,155.4 L455.5,154.7 L459.0,154.5 L462.5,154.4 L466.0,156.2 L469.5,154.6 L473.0,154.9 L476.5,155.2 L480.0,156.4 L483.5,154.5 L487.0,155.4 L490.5,155.6 L494.0,156.5 L497.5,156.3 L501.0,156.4 L504.5,154.9 L508.0,155.3 L511.5,155.1 L515.0,156.5 L518.5,156.6 L522.0,154.6 L525.5,154.7 L529.0,154.8 L532.5,154.8 L536.0,155.5 L539.5,155.7 L543.0,154.9 L546.5,154.3 L550.0,155.3 L553.5,155.2 L557.0,155.7 L560.5,156.6 L564.0,156.0 L567.5,155.5 L571.0,155.8 L573.5,155.5 L573.5,155.5 L573.5,225.0 L574.2,225.0 L574.2,294.5 L574.8,294.5 L574.8,364.0 L575.5,364.0 L575.5,433.5 L575.5,433.9 L579.0,432.4 L582.5,434.5 L586.0,434.2 L589.5,434.4 L593.0,434.2 L596.5,433.2 L600.0,433.2 L603.5,432.5 L605.0,433.5 L605.0,433.5 L605.0,364.0 L605.7,364.0 L605.7,294.5 L606.3,294.5 L606.3,225.0 L607.0,225.0 L607.0,155.5 L607.0,155.8 L610.5,154.4 L614.0,154.4 L617.5,154.8 L621.0,154.7 L624.5,155.1 L628.0,154.4 L631.5,154.3 L635.0,154.6 L638.5,154.5 L642.0,155.2 L645.5,154.3 L649.0,156.4 L652.5,155.8 L656.0,154.6 L659.5,154.9 L663.0,155.1 L666.5,155.2 L670.0,154.6 L673.5,156.4 L677.0,156.7 L680.5,155.4 L684.0,155.5 L687.5,154.5 L691.0,154.5 L694.5,155.1 L698.0,154.9 L701.5,156.3 L705.0,154.7 L708.5,154.3 L710.0,155.5 L710.0,155.5 L710.0,225.0 L710.7,225.0 L710.7,294.5 L711.3,294.5 L711.3,364.0 L712.0,364.0 L712.0,433.5 L712.0,434.6 L715.5,433.6 L719.0,432.6 L722.5,433.6 L726.0,432.3 L729.5,433.6 L733.0,434.7 L736.5,434.4 L740.0,434.0 L743.5,432.9 L747.0,433.2 L750.5,432.7 L754.0,434.2 L757.5,433.6 L761.0,434.2 L764.5,433.1 L768.0,432.8 L771.5,434.3 L775.0,434.7 L778.5,434.4 L782.0,434.3 L785.5,434.3 L789.0,434.1 L792.5,432.8 L796.0,433.5 L799.5,433.1 L803.0,432.3 L806.5,432.3 L810.0,432.9 L813.5,432.9 L817.0,434.0 L820.5,434.6 L824.0,433.4 L827.5,434.6 L831.0,434.7 L834.5,434.6 L838.0,433.2 L841.5,432.8 L844.5,433.5 L844.5,433.5 L844.5,364.0 L845.2,364.0 L845.2,294.5 L845.8,294.5 L845.8,225.0 L846.5,225.0 L846.5,155.5 L846.5,154.8 L850.0,154.7 L853.5,154.8 L857.0,155.8 L860.5,156.5 L864.0,156.4 L867.5,155.4 L871.0,155.9 L874.5,156.2 L878.0,154.5 L879.5,155.5 L879.5,155.5 L879.5,225.0 L880.2,225.0 L880.2,294.5 L880.8,294.5 L880.8,364.0 L881.5,364.0 L881.5,433.5 L881.5,433.9 L885.0,434.5 L888.5,434.2 L892.0,434.1 L895.5,433.4 L899.0,432.7 L902.5,434.2 L906.0,433.1 L909.5,434.3 L913.0,434.7 L916.5,433.2 L920.0,433.3 L923.5,434.6 L927.0,434.1 L930.5,432.7 L934.0,432.6 L937.5,432.6 L941.0,434.5 L944.5,434.3 L948.0,432.6 L951.5,434.3 L955.0,434.7 L958.5,433.9 L962.0,433.1 L965.5,433.6 L969.0,432.6 L972.5,432.3 L976.0,434.7 L979.5,433.9 L981.5,433.5 L981.5,433.5 L981.5,364.0 L982.2,364.0 L982.2,294.5 L982.8,294.5 L982.8,225.0 L983.5,225.0 L983.5,155.5 L983.5,155.6 L987.0,156.6 L990.5,155.3 L994.0,156.4 L997.5,156.3 L1001.0,154.8 L1004.5,154.9 L1008.0,155.0 L1011.5,154.9 L1015.0,155.7 L1018.5,154.9 L1022.0,155.3 L1025.5,154.6 L1029.0,156.5 L1032.5,155.1 L1036.0,155.4 L1039.5,155.7 L1043.0,156.5 L1046.5,155.3 L1050.0,156.5 L1053.5,155.5 L1057.0,155.6 L1060.5,155.6 L1064.0,154.3 L1067.5,155.4 L1071.0,154.7 L1074.5,154.3 L1078.0,156.2 L1081.5,154.7 L1085.0,155.4 L1088.5,156.1 L1092.0,155.6 L1095.5,155.1 L1099.0,155.5 L1102.5,155.6 L1106.0,156.2 L1109.5,154.5 L1113.0,155.7 L1115.0,155.5 L1115.0,155.5 L1115.0,225.0 L1115.7,225.0 L1115.7,294.5 L1116.3,294.5 L1116.3,364.0 L1117.0,364.0 L1117.0,433.5 L1117.0,432.9 L1120.5,432.9 L1124.0,434.2 L1127.5,433.5 L1131.0,433.7 L1134.5,434.1 L1138.0,434.5 L1141.5,433.4 L1145.0,433.8 L1146.5,433.5 L1146.5,433.5 L1146.5,364.0 L1147.2,364.0 L1147.2,294.5 L1147.8,294.5 L1147.8,225.0 L1148.5,225.0 L1148.5,155.5 L1148.5,155.5 L1152.0,155.5 L1155.5,156.0 L1159.0,155.4 L1162.5,155.6 L1166.0,155.4 L1169.5,156.6 L1173.0,156.0 L1176.5,156.4 L1180.0,156.6 L1183.5,154.9 L1187.0,155.6 L1190.5,156.6 L1194.0,156.3 L1197.5,154.6 L1201.0,154.6 L1204.5,155.4 L1208.0,154.4 L1211.5,154.9 L1215.0,154.4 L1218.5,155.9 L1222.0,156.2 L1225.5,156.5 L1229.0,154.6 L1232.5,156.0 L1236.0,155.9 L1239.5,154.6 L1243.0,156.5 L1246.5,156.7 L1249.0,155.5 L1249.0,155.5 L1249.0,225.0 L1249.7,225.0 L1249.7,294.5 L1250.3,294.5 L1250.3,364.0 L1251.0,364.0 L1251.0,433.5 L1251.0,432.8 L1254.5,434.6 L1258.0,433.2 L1261.5,433.5 L1265.0,434.7 L1268.5,434.3 L1272.0,432.7 L1275.5,433.3 L1279.0,433.5 L1282.5,433.1 L1286.0,432.7 L1289.5,433.0 L1293.0,434.1 L1296.5,432.3 L1300.0,433.6 L1303.5,433.4 L1307.0,432.3 L1310.5,433.1 L1314.0,433.8 L1317.5,433.5 L1321.0,432.4 L1324.5,434.7 L1328.0,434.2 L1331.5,434.7 L1335.0,432.5 L1338.5,432.9 L1342.0,432.3 L1345.5,434.2 L1349.0,432.9 L1352.5,432.6 L1356.0,433.3 L1359.5,434.5 L1363.0,434.3 L1366.5,432.9 L1370.0,432.6 L1373.5,434.5 L1377.0,433.7 L1380.5,434.0 L1384.0,432.5 L1386.0,433.5 L1386.0,433.5 L1386.0,364.0 L1386.7,364.0 L1386.7,294.5 L1387.3,294.5 L1387.3,225.0 L1388.0,225.0 L1388.0,155.5 L1388.0,154.4 L1391.5,156.0 L1395.0,155.3 L1398.5,154.4 L1402.0,156.6 L1405.5,155.8 L1409.0,156.3 L1412.5,154.5 L1416.0,156.4 L1419.5,154.4 L1423.0,155.5 L1423.0,155.5 L1423.0,225.0 L1423.7,225.0 L1423.7,294.5 L1424.3,294.5 L1424.3,364.0 L1425.0,364.0 L1425.0,433.5 L1425.0,434.4 L1428.5,433.4 L1432.0,433.1 L1435.5,433.6 L1439.0,434.6 L1442.5,432.9 L1446.0,432.6 L1449.5,433.6 L1453.0,432.8 L1456.5,432.5 L1460.0,432.7 L1463.5,432.4 L1467.0,432.8 L1470.5,433.0 L1474.0,433.0 L1477.5,434.1 L1480.0,433.5" fill="none" stroke="#d4d3c2" stroke-width="1.6" stroke-linejoin="round"/>
<path d="M170.0,471.0 L170.0,470.5 L173.5,471.0 L177.0,470.2 L178.5,471.0 L178.5,471.0 L178.5,505.6 L179.5,505.6 L179.5,540.2 L180.5,540.2 L180.5,574.9 L181.5,574.9 L181.5,609.5 L181.5,609.1 L185.0,608.3 L188.5,608.9 L192.0,608.3 L195.5,610.1 L199.0,609.6 L202.5,608.7 L206.0,609.5 L206.0,609.5 L206.0,574.9 L207.0,574.9 L207.0,540.2 L208.0,540.2 L208.0,505.6 L209.0,505.6 L209.0,471.0 L209.0,470.9 L212.5,472.1 L216.0,470.0 L219.5,471.8 L223.0,470.8 L226.5,471.0 L230.0,471.8 L233.5,470.7 L237.0,471.0 L240.5,471.5 L244.0,472.2 L247.5,470.6 L251.0,471.8 L254.5,471.5 L258.0,471.3 L261.5,471.0 L261.5,471.0 L261.5,505.6 L262.5,505.6 L262.5,540.2 L263.5,540.2 L263.5,574.9 L264.5,574.9 L264.5,609.5 L264.5,609.3 L268.0,609.1 L271.5,608.4 L275.0,608.6 L278.5,608.4 L282.0,610.1 L285.5,608.9 L287.5,609.5 L287.5,609.5 L287.5,574.9 L288.5,574.9 L288.5,540.2 L289.5,540.2 L289.5,505.6 L290.5,505.6 L290.5,471.0 L290.5,470.2 L294.0,470.0 L297.5,471.9 L301.0,471.9 L304.5,471.4 L308.0,470.5 L311.5,470.4 L315.0,470.5 L318.5,470.9 L322.0,470.1 L325.5,470.9 L329.0,470.4 L332.5,472.2 L336.0,472.2 L339.5,471.1 L343.0,470.4 L344.5,471.0 L344.5,471.0 L344.5,505.6 L345.5,505.6 L345.5,540.2 L346.5,540.2 L346.5,574.9 L347.5,574.9 L347.5,609.5 L347.5,610.7 L351.0,609.0 L354.5,609.1 L358.0,608.3 L361.5,609.2 L365.0,609.4 L368.5,609.5 L370.0,609.5 L370.0,609.5 L370.0,574.9 L371.0,574.9 L371.0,540.2 L372.0,540.2 L372.0,505.6 L373.0,505.6 L373.0,471.0 L373.0,470.3 L376.5,471.0 L380.0,469.8 L383.5,470.4 L387.0,470.0 L390.5,470.7 L394.0,469.9 L397.5,469.8 L401.0,470.5 L404.5,470.3 L408.0,471.2 L411.5,471.1 L415.0,471.6 L418.5,471.4 L422.0,471.5 L425.5,471.9 L426.5,471.0 L426.5,471.0 L426.5,505.6 L427.5,505.6 L427.5,540.2 L428.5,540.2 L428.5,574.9 L429.5,574.9 L429.5,609.5 L429.5,609.2 L433.0,609.1 L436.5,610.7 L440.0,608.6 L443.5,610.1 L447.0,609.9 L450.5,608.4 L451.5,609.5 L451.5,609.5 L451.5,574.9 L452.5,574.9 L452.5,540.2 L453.5,540.2 L453.5,505.6 L454.5,505.6 L454.5,471.0 L454.5,471.8 L458.0,472.0 L461.5,471.3 L465.0,471.6 L468.5,471.8 L472.0,470.1 L475.5,471.1 L479.0,471.0 L482.5,471.8 L486.0,471.8 L489.5,471.8 L493.0,471.2 L496.5,472.0 L500.0,471.5 L503.5,471.5 L507.0,470.3 L508.0,471.0 L508.0,471.0 L508.0,505.6 L509.0,505.6 L509.0,540.2 L510.0,540.2 L510.0,574.9 L511.0,574.9 L511.0,609.5 L511.0,608.3 L514.5,608.6 L518.0,609.2 L521.5,608.5 L525.0,610.3 L528.5,609.6 L532.0,609.8 L533.5,609.5 L533.5,609.5 L533.5,574.9 L534.5,574.9 L534.5,540.2 L535.5,540.2 L535.5,505.6 L536.5,505.6 L536.5,471.0 L536.5,471.3 L540.0,471.5 L543.5,471.0 L547.0,469.8 L550.5,471.7 L554.0,471.6 L557.5,471.0 L561.0,471.1 L564.5,471.4 L568.0,469.9 L571.5,471.6 L575.0,470.4 L578.5,469.9 L582.0,470.4 L585.5,471.6 L589.0,470.3 L589.5,471.0 L589.5,471.0 L589.5,505.6 L590.5,505.6 L590.5,540.2 L591.5,540.2 L591.5,574.9 L592.5,574.9 L592.5,609.5 L592.5,610.1 L596.0,610.7 L599.5,609.5 L603.0,609.2 L606.5,609.4 L610.0,610.0 L613.5,610.2 L617.0,609.8 L618.5,609.5 L618.5,609.5 L618.5,574.9 L619.5,574.9 L619.5,540.2 L620.5,540.2 L620.5,505.6 L621.5,505.6 L621.5,471.0 L621.5,471.4 L625.0,469.9 L628.5,470.1 L632.0,470.4 L635.5,471.6 L639.0,470.5 L642.5,471.2 L646.0,469.8 L649.5,469.9 L653.0,470.4 L656.5,471.4 L660.0,471.5 L663.5,471.4 L667.0,470.5 L670.5,471.0 L673.0,471.0 L673.0,471.0 L673.0,505.6 L674.0,505.6 L674.0,540.2 L675.0,540.2 L675.0,574.9 L676.0,574.9 L676.0,609.5 L676.0,609.4 L679.5,609.4 L683.0,608.5 L686.5,610.5 L690.0,608.7 L693.5,610.7 L697.0,610.6 L700.0,609.5 L700.0,609.5 L700.0,574.9 L701.0,574.9 L701.0,540.2 L702.0,540.2 L702.0,505.6 L703.0,505.6 L703.0,471.0 L703.0,469.8 L706.5,470.9 L710.0,471.8 L713.5,472.2 L717.0,470.9 L720.5,470.4 L724.0,470.3 L727.5,472.1 L731.0,470.3 L734.5,471.2 L738.0,470.1 L741.5,471.1 L745.0,472.1 L748.5,470.1 L752.0,471.8 L754.5,471.0 L754.5,471.0 L754.5,505.6 L755.5,505.6 L755.5,540.2 L756.5,540.2 L756.5,574.9 L757.5,574.9 L757.5,609.5 L757.5,609.5 L761.0,610.5 L764.5,610.0 L768.0,608.8 L771.5,610.5 L775.0,609.5 L778.5,608.3 L782.0,608.3 L783.5,609.5 L783.5,609.5 L783.5,574.9 L784.5,574.9 L784.5,540.2 L785.5,540.2 L785.5,505.6 L786.5,505.6 L786.5,471.0 L786.5,471.0 L790.0,470.9 L793.5,470.5 L797.0,470.1 L800.5,470.6 L804.0,470.5 L807.5,471.9 L811.0,469.8 L814.5,471.6 L818.0,471.8 L821.5,470.1 L825.0,472.1 L828.5,471.5 L832.0,472.0 L835.5,470.5 L838.5,471.0 L838.5,471.0 L838.5,505.6 L839.5,505.6 L839.5,540.2 L840.5,540.2 L840.5,574.9 L841.5,574.9 L841.5,609.5 L841.5,609.2 L845.0,609.2 L848.5,610.7 L852.0,609.7 L855.5,609.2 L859.0,609.3 L862.5,608.9 L866.0,609.5 L866.0,609.5 L866.0,574.9 L867.0,574.9 L867.0,540.2 L868.0,540.2 L868.0,505.6 L869.0,505.6 L869.0,471.0 L869.0,469.9 L872.5,470.0 L876.0,471.8 L879.5,470.5 L883.0,472.1 L886.5,470.4 L890.0,470.4 L893.5,471.0 L897.0,470.2 L900.5,470.7 L904.0,472.1 L907.5,472.0 L911.0,471.8 L914.5,471.3 L918.0,472.0 L920.0,471.0 L920.0,471.0 L920.0,505.6 L921.0,505.6 L921.0,540.2 L922.0,540.2 L922.0,574.9 L923.0,574.9 L923.0,609.5 L923.0,610.6 L926.5,609.6 L930.0,610.0 L933.5,608.4 L937.0,610.1 L940.5,609.4 L944.0,610.1 L947.0,609.5 L947.0,609.5 L947.0,574.9 L948.0,574.9 L948.0,540.2 L949.0,540.2 L949.0,505.6 L950.0,505.6 L950.0,471.0 L950.0,471.4 L953.5,470.5 L957.0,469.9 L960.5,472.1 L964.0,470.1 L967.5,470.9 L971.0,470.6 L974.5,470.5 L978.0,471.6 L981.5,472.2 L985.0,470.4 L988.5,471.4 L992.0,470.5 L995.5,471.1 L999.0,470.7 L1001.5,471.0 L1001.5,471.0 L1001.5,505.6 L1002.5,505.6 L1002.5,540.2 L1003.5,540.2 L1003.5,574.9 L1004.5,574.9 L1004.5,609.5 L1004.5,608.7 L1008.0,608.7 L1011.5,608.8 L1015.0,610.5 L1018.5,609.5 L1022.0,608.8 L1025.5,610.5 L1029.0,610.7 L1030.5,609.5 L1030.5,609.5 L1030.5,574.9 L1031.5,574.9 L1031.5,540.2 L1032.5,540.2 L1032.5,505.6 L1033.5,505.6 L1033.5,471.0 L1033.5,470.9 L1037.0,470.1 L1040.5,470.2 L1044.0,470.0 L1047.5,470.6 L1051.0,470.0 L1054.5,470.3 L1058.0,470.4 L1061.5,471.2 L1065.0,472.0 L1068.5,471.6 L1072.0,470.8 L1075.5,470.8 L1079.0,471.1 L1082.5,470.7 L1085.5,471.0 L1085.5,471.0 L1085.5,505.6 L1086.5,505.6 L1086.5,540.2 L1087.5,540.2 L1087.5,574.9 L1088.5,574.9 L1088.5,609.5 L1088.5,609.1 L1092.0,608.4 L1095.5,608.9 L1099.0,610.7 L1102.5,608.6 L1106.0,609.5 L1109.5,609.8 L1112.0,609.5 L1112.0,609.5 L1112.0,574.9 L1113.0,574.9 L1113.0,540.2 L1114.0,540.2 L1114.0,505.6 L1115.0,505.6 L1115.0,471.0 L1115.0,471.9 L1118.5,470.3 L1122.0,470.4 L1125.5,470.4 L1129.0,470.7 L1132.5,470.9 L1136.0,472.1 L1139.5,471.9 L1143.0,471.9 L1146.5,469.8 L1150.0,469.8 L1153.5,471.5 L1157.0,472.0 L1160.5,470.9 L1164.0,471.2 L1167.5,469.8 L1169.5,471.0 L1169.5,471.0 L1169.5,505.6 L1170.5,505.6 L1170.5,540.2 L1171.5,540.2 L1171.5,574.9 L1172.5,574.9 L1172.5,609.5 L1172.5,609.2 L1176.0,610.6 L1179.5,610.3 L1183.0,610.4 L1186.5,610.7 L1190.0,608.9 L1193.5,608.5 L1195.5,609.5 L1195.5,609.5 L1195.5,574.9 L1196.5,574.9 L1196.5,540.2 L1197.5,540.2 L1197.5,505.6 L1198.5,505.6 L1198.5,471.0 L1198.5,470.1 L1202.0,471.1 L1205.5,471.5 L1209.0,472.1 L1212.5,471.6 L1216.0,471.4 L1219.5,471.7 L1223.0,470.9 L1226.5,471.1 L1230.0,469.8 L1233.5,471.7 L1237.0,470.3 L1240.5,472.0 L1244.0,471.4 L1247.5,470.5 L1251.0,471.0 L1251.0,471.0 L1251.0,505.6 L1252.0,505.6 L1252.0,540.2 L1253.0,540.2 L1253.0,574.9 L1254.0,574.9 L1254.0,609.5 L1254.0,608.6 L1257.5,608.9 L1261.0,609.8 L1264.5,610.0 L1268.0,608.5 L1271.5,608.4 L1275.0,609.6 L1278.0,609.5 L1278.0,609.5 L1278.0,574.9 L1279.0,574.9 L1279.0,540.2 L1280.0,540.2 L1280.0,505.6 L1281.0,505.6 L1281.0,471.0 L1281.0,471.2 L1284.5,470.7 L1288.0,470.3 L1291.5,471.3 L1295.0,469.8 L1298.5,470.5 L1302.0,470.9 L1305.5,472.1 L1309.0,471.4 L1312.5,472.0 L1316.0,470.9 L1319.5,470.3 L1323.0,470.4 L1326.5,472.2 L1330.0,471.5 L1332.0,471.0 L1332.0,471.0 L1332.0,505.6 L1333.0,505.6 L1333.0,540.2 L1334.0,540.2 L1334.0,574.9 L1335.0,574.9 L1335.0,609.5 L1335.0,609.0 L1338.5,608.3 L1342.0,609.5 L1345.5,609.9 L1349.0,609.3 L1352.5,608.9 L1356.0,609.9 L1359.5,609.5 L1359.5,609.5 L1359.5,574.9 L1360.5,574.9 L1360.5,540.2 L1361.5,540.2 L1361.5,505.6 L1362.5,505.6 L1362.5,471.0 L1362.5,472.1 L1366.0,470.3 L1369.5,469.8 L1373.0,470.6 L1376.5,470.8 L1380.0,471.5 L1383.5,470.2 L1387.0,471.7 L1390.5,471.6 L1394.0,471.0 L1397.5,470.3 L1401.0,472.2 L1404.5,470.5 L1408.0,471.8 L1411.5,470.3 L1413.5,471.0 L1413.5,471.0 L1413.5,505.6 L1414.5,505.6 L1414.5,540.2 L1415.5,540.2 L1415.5,574.9 L1416.5,574.9 L1416.5,609.5 L1416.5,608.8 L1420.0,610.2 L1423.5,609.0 L1427.0,610.6 L1430.5,609.5 L1434.0,608.7 L1437.5,608.8 L1441.0,609.3 L1443.0,609.5 L1443.0,609.5 L1443.0,574.9 L1444.0,574.9 L1444.0,540.2 L1445.0,540.2 L1445.0,505.6 L1446.0,505.6 L1446.0,471.0 L1446.0,471.4 L1449.5,472.1 L1453.0,470.1 L1456.5,470.7 L1460.0,470.3 L1463.5,472.2 L1467.0,470.1 L1470.5,469.9 L1474.0,469.9 L1477.5,470.7 L1480.0,471.0" fill="none" stroke="#a9d2c2" stroke-width="1.6" stroke-linejoin="round"/>
<path d="M1192.5,407 H1209.5 M1201,398.5 V415.5" stroke="#d8d6c0" stroke-width="1.4"/>
<rect x="1484" y="433.3" width="7" height="1.5" fill="#d6d4bc"/>
<rect x="1490" y="424" width="32" height="20" fill="#f3d264"/>
<text x="1506" y="440" font-size="15" font-weight="bold" fill="#1a1a1a" text-anchor="middle">1</text>
<rect x="1484" y="609.3" width="7" height="1.5" fill="#a9d2c2"/>
<rect x="1490" y="600.5" width="32" height="19.5" fill="#5fc38c"/>
<text x="1506" y="616" font-size="15" font-weight="bold" fill="#1a1a1a" text-anchor="middle">2</text>
<rect x="103" y="808" width="1429" height="60" fill="#4e749b"/>
<defs><linearGradient id="appg" x1="0" y1="0" x2="1" y2="1"><stop offset="0" stop-color="#6fb4e8"/><stop offset="0.45" stop-color="#2d62b0"/><stop offset="1" stop-color="#141e78"/></linearGradient></defs>
<rect x="101" y="26.4" width="18.8" height="18.4" rx="4" fill="url(#appg)"/>
<path d="M101.3,33.8 L107.8,28.8 L110.8,36.2 L119.6,32.2" fill="none" stroke="#fff" stroke-width="1.9" stroke-linejoin="miter"/>
<path d="M101.3,39.4 L106.8,35.8 L110.2,42.6 L119.6,38.8" fill="none" stroke="#fff" stroke-width="1.9" stroke-linejoin="miter"/>
<text x="129.2" y="43.3" font-size="16.35" fill="#1e2a36">ScopeFileViewer - test2.vsm</text>
<rect x="1345.0" y="19.5" width="60.0" height="34" rx="3" fill="#9fb9d7" stroke="#6f86a5" stroke-width="1"/>
<rect x="1346.0" y="20.5" width="58.0" height="13.2" rx="2" fill="#c6d9ee"/>
<rect x="1407.5" y="19.5" width="60.0" height="34" rx="3" fill="#9fb9d7" stroke="#6f86a5" stroke-width="1"/>
<rect x="1408.5" y="20.5" width="58.0" height="13.2" rx="2" fill="#c6d9ee"/>
<rect x="1470.5" y="19.5" width="59.5" height="34" rx="3" fill="#c9432d" stroke="#5a4a48" stroke-width="1"/>
<rect x="1471.5" y="20.5" width="57.5" height="13.2" rx="2" fill="#e99b8b"/>
<rect x="1365" y="35" width="19" height="6.5" rx="1.5" fill="#fff" stroke="#333c48" stroke-width="1.2"/>
<rect x="1434.5" y="25.5" width="13.2" height="12" rx="1" fill="none" stroke="#333c48" stroke-width="4.6"/>
<rect x="1434.5" y="25.5" width="13.2" height="12" rx="1" fill="#8fa8c8" stroke="#fff" stroke-width="2.6"/>
<rect x="1427" y="32.8" width="13.5" height="12.2" rx="1" fill="none" stroke="#333c48" stroke-width="4.6"/>
<rect x="1427" y="32.8" width="13.5" height="12.2" rx="1" fill="#8aa3c2" stroke="#fff" stroke-width="2.6"/>
<path d="M1492.5,29.5 L1507.5,42 M1507.5,29.5 L1492.5,42" stroke="#3b3b3b" stroke-width="6" stroke-linecap="round"/>
<path d="M1492.5,29.5 L1507.5,42 M1507.5,29.5 L1492.5,42" stroke="#fff" stroke-width="3.6" stroke-linecap="round"/>
<rect x="105.5" y="57" width="602" height="34" rx="3" fill="#050505" stroke="#c4c4c4" stroke-width="1.6"/>
<rect x="222.4" y="57" width="1.6" height="34" fill="#c4c4c4"/>
<rect x="361.4" y="57" width="1.6" height="34" fill="#c4c4c4"/>
<rect x="499.8" y="57" width="1.6" height="34" fill="#c4c4c4"/>
<rect x="712" y="61.4" width="2" height="2" fill="#8a8a8a"/>
<rect x="712" y="66.0" width="2" height="2" fill="#8a8a8a"/>
<rect x="712" y="70.5" width="2" height="2" fill="#8a8a8a"/>
<rect x="712" y="75.0" width="2" height="2" fill="#8a8a8a"/>
<rect x="712" y="79.5" width="2" height="2" fill="#8a8a8a"/>
<text x="147.5" y="80.7" font-size="20" fill="#f2f2f2">Setup</text>
<text x="268.5" y="80.7" font-size="20" fill="#f2f2f2">Cursors</text>
<text x="407.8" y="80.7" font-size="20" fill="#f2f2f2">Refresh</text>
<text x="546.8" y="80.7" font-size="20" fill="#f2f2f2">File</text>
<text x="644" y="80.7" font-size="20" fill="#f2f2f2">Print</text>
<path d="M114,66 Q119,60.5 124,66" fill="none" stroke="#3a8a5a" stroke-width="1.6"/>
<rect x="107" y="65.5" width="22.5" height="16.5" rx="2" fill="#b5141c"/>
<rect x="107" y="65.5" width="22.5" height="6" rx="2" fill="#d52a2a"/>
<rect x="107" y="71.3" width="22.5" height="1" fill="#6a0a0e"/>
<circle cx="117" cy="72" r="1.3" fill="#e8e8e8"/>
<path d="M227,66 L231,61.6 L235,66 L231,70.4 Z" fill="#f2b81e"/>
<path d="M243.8,66 L247.8,61.6 L251.8,66 L247.8,70.4 Z" fill="#f2c82a"/>
<path d="M227.5,64 L229,62.5" stroke="#fff6c0" stroke-width="1"/>
<rect x="235.6" y="61" width="1.5" height="12" fill="#e8b020"/>
<rect x="235.6" y="76.5" width="1.5" height="9" fill="#e8b020"/>
<rect x="241.1" y="61" width="1.5" height="16" fill="#e8a820"/>
<path d="M227.3,78.6 L233,72.9 L241.6,80.8 L251.6,71.2" fill="none" stroke="#48a8e0" stroke-width="2" stroke-linejoin="round"/>
<path d="M227.5,77.5 L232,73.2" fill="none" stroke="#c0e8f8" stroke-width="0.8"/>
<rect x="227" y="83.2" width="6.2" height="2.6" fill="#50c0f0"/><rect x="245" y="83.2" width="6.5" height="2.6" fill="#70d0f8"/>
<circle cx="236.4" cy="84.4" r="1.9" fill="#f8e020"/><circle cx="241.8" cy="84.2" r="1.9" fill="#f8e020"/>
<path d="M376,62.5 Q383.5,62.5 383.8,68 L383.8,78.5 L389.5,78.5 L382.5,86 L376.5,78.5 L378.8,78.5 L378.8,69 Q378.5,67.5 376,67.5 Z" fill="#a8d8f4" stroke="#3a7cc0" stroke-width="0.8"/>
<path d="M366.2,68.5 L373.2,61.2 L379,68.5 L375.6,68.5 L375.6,80 Q376,83.5 380.5,85.8 L373.5,85.8 Q370.3,83.5 370.3,80 L370.3,68.5 Z" fill="#d4eeb0" stroke="#3e9a38" stroke-width="0.8"/>
<path d="M371.8,69 V80" stroke="#f4fff0" stroke-width="1.2"/>
<path d="M380.5,70 V78" stroke="#e8f6ff" stroke-width="1.2"/>
<path d="M507,66 L507,63.5 Q507,62.8 508,62.8 L514,62.8 L516,65.5 L526,65.5 Q527,65.5 527,66.5 L527,83.5 Q527,84.5 526,84.5 L508,84.5 Q507,84.5 507,83.5 Z" fill="#e8b820"/>
<path d="M506.5,70 L527.5,70 L527,83.5 Q527,84.5 526,84.5 L508,84.5 Q507,84.5 507,83.5 Z" fill="#f8d840"/>
<rect x="603" y="73.5" width="22.5" height="12.5" rx="2" fill="#e8e6c8"/>
<rect x="603" y="80" width="22.5" height="6" rx="1.5" fill="#f6f4e4"/>
<rect x="608" y="62.5" width="12.5" height="14" fill="#e8eef8" stroke="#3a5a8a" stroke-width="1.2"/>
<path d="M610,66 h7 M610,69 h8 M610,72 h8" stroke="#3a5a8a" stroke-width="1.2"/>
<text x="125.5" y="103.6" font-size="15.8" font-weight="bold" fill="#ece0a0" stroke="#ece0a0" stroke-width="0.25" text-anchor="end">6</text>
<text x="125.5" y="159.3" font-size="15.8" font-weight="bold" fill="#ece0a0" stroke="#ece0a0" stroke-width="0.25" text-anchor="end">5</text>
<text x="125.5" y="215.1" font-size="15.8" font-weight="bold" fill="#ece0a0" stroke="#ece0a0" stroke-width="0.25" text-anchor="end">4</text>
<text x="125.5" y="270.8" font-size="15.8" font-weight="bold" fill="#ece0a0" stroke="#ece0a0" stroke-width="0.25" text-anchor="end">3</text>
<text x="125.5" y="326.6" font-size="15.8" font-weight="bold" fill="#ece0a0" stroke="#ece0a0" stroke-width="0.25" text-anchor="end">2</text>
<text x="125.5" y="382.3" font-size="15.8" font-weight="bold" fill="#ece0a0" stroke="#ece0a0" stroke-width="0.25" text-anchor="end">1</text>
<text x="125.5" y="438.1" font-size="15.8" font-weight="bold" fill="#ece0a0" stroke="#ece0a0" stroke-width="0.25" text-anchor="end">0</text>
<text x="125.5" y="493.8" font-size="15.8" font-weight="bold" fill="#ece0a0" stroke="#ece0a0" stroke-width="0.25" text-anchor="end">-1</text>
<text x="125.5" y="549.5" font-size="15.8" font-weight="bold" fill="#ece0a0" stroke="#ece0a0" stroke-width="0.25" text-anchor="end">-2</text>
<text x="125.5" y="605.3" font-size="15.8" font-weight="bold" fill="#ece0a0" stroke="#ece0a0" stroke-width="0.25" text-anchor="end">-3</text>
<text x="159.6" y="112.9" font-size="16" font-weight="bold" fill="#8fd4a8" stroke="#8fd4a8" stroke-width="0.25" text-anchor="end">18</text>
<text x="159.6" y="168.6" font-size="16" font-weight="bold" fill="#8fd4a8" stroke="#8fd4a8" stroke-width="0.25" text-anchor="end">16</text>
<text x="159.6" y="224.3" font-size="16" font-weight="bold" fill="#8fd4a8" stroke="#8fd4a8" stroke-width="0.25" text-anchor="end">14</text>
<text x="159.6" y="279.9" font-size="16" font-weight="bold" fill="#8fd4a8" stroke="#8fd4a8" stroke-width="0.25" text-anchor="end">12</text>
<text x="159.6" y="335.6" font-size="16" font-weight="bold" fill="#8fd4a8" stroke="#8fd4a8" stroke-width="0.25" text-anchor="end">10</text>
<text x="159.6" y="391.2" font-size="16" font-weight="bold" fill="#8fd4a8" stroke="#8fd4a8" stroke-width="0.25" text-anchor="end">8</text>
<text x="159.6" y="446.9" font-size="16" font-weight="bold" fill="#8fd4a8" stroke="#8fd4a8" stroke-width="0.25" text-anchor="end">6</text>
<text x="159.6" y="502.6" font-size="16" font-weight="bold" fill="#8fd4a8" stroke="#8fd4a8" stroke-width="0.25" text-anchor="end">4</text>
<text x="159.6" y="558.2" font-size="16" font-weight="bold" fill="#8fd4a8" stroke="#8fd4a8" stroke-width="0.25" text-anchor="end">2</text>
<text x="159.6" y="613.9" font-size="16" font-weight="bold" fill="#8fd4a8" stroke="#8fd4a8" stroke-width="0.25" text-anchor="end">0</text>
<text x="168.6" y="668.2" font-size="16" font-weight="bold" fill="#f4f4f4" stroke="#f4f4f4" stroke-width="0.3" text-anchor="middle">0</text>
<text x="300.1" y="668.2" font-size="16" font-weight="bold" fill="#f4f4f4" stroke="#f4f4f4" stroke-width="0.3" text-anchor="middle">50</text>
<text x="431.6" y="668.2" font-size="16" font-weight="bold" fill="#f4f4f4" stroke="#f4f4f4" stroke-width="0.3" text-anchor="middle">100</text>
<text x="563.1" y="668.2" font-size="16" font-weight="bold" fill="#f4f4f4" stroke="#f4f4f4" stroke-width="0.3" text-anchor="middle">150</text>
<text x="694.6" y="668.2" font-size="16" font-weight="bold" fill="#f4f4f4" stroke="#f4f4f4" stroke-width="0.3" text-anchor="middle">200</text>
<text x="826.1" y="668.2" font-size="16" font-weight="bold" fill="#f4f4f4" stroke="#f4f4f4" stroke-width="0.3" text-anchor="middle">250</text>
<text x="957.6" y="668.2" font-size="16" font-weight="bold" fill="#f4f4f4" stroke="#f4f4f4" stroke-width="0.3" text-anchor="middle">300</text>
<text x="1089.1" y="668.2" font-size="16" font-weight="bold" fill="#f4f4f4" stroke="#f4f4f4" stroke-width="0.3" text-anchor="middle">350</text>
<text x="1220.6" y="668.2" font-size="16" font-weight="bold" fill="#f4f4f4" stroke="#f4f4f4" stroke-width="0.3" text-anchor="middle">400</text>
<text x="1352.1" y="668.2" font-size="16" font-weight="bold" fill="#f4f4f4" stroke="#f4f4f4" stroke-width="0.3" text-anchor="middle">450</text>
<text x="1511" y="668.2" font-size="16" font-weight="bold" fill="#f4f4f4" stroke="#f4f4f4" stroke-width="0.3" text-anchor="end">500 ms</text>
<text x="128" y="689" font-size="13" font-weight="bold" fill="#eaeaea">Profile</text>
<text x="828.7" y="689" font-size="13" font-weight="bold" fill="#eaeaea" text-anchor="middle">Min</text>
<text x="919.0" y="689" font-size="13" font-weight="bold" fill="#eaeaea" text-anchor="middle">Live</text>
<text x="1007.7" y="689" font-size="13" font-weight="bold" fill="#eaeaea" text-anchor="middle">Max</text>
<text x="1166.0" y="689" font-size="13" font-weight="bold" fill="#eaeaea" text-anchor="middle">Cursor 1</text>
<text x="1261.5" y="689" font-size="13" font-weight="bold" fill="#eaeaea" text-anchor="middle">Cursor 2</text>
<text x="1356.0" y="689" font-size="13" font-weight="bold" fill="#eaeaea" text-anchor="middle">Delta</text>
<text x="1456.0" y="689" font-size="13" font-weight="bold" fill="#eaeaea" text-anchor="middle">Frequency</text>
<rect x="110.5" y="694" width="609.0" height="2" fill="#a8a8a8"/>
<rect x="786.8" y="694" width="264.7" height="2" fill="#a8a8a8"/>
<rect x="1119.0" y="694" width="404.0" height="2" fill="#a8a8a8"/>
<path d="M139.7,701.6 V699.0 H154.9 V701.6" fill="none" stroke="#d8d8c0" stroke-width="1.6"/>
<path d="M139.7,710.6 V713.2 H154.9 V710.6" fill="none" stroke="#d8d8c0" stroke-width="1.6"/>
<path d="M139.7,706.2 Q147.3,699.8 154.9,706.2 Q147.3,712.6 139.7,706.2 Z" fill="#f4f4f4"/>
<circle cx="147.3" cy="706.2" r="3" fill="#141414"/>
<circle cx="148.2" cy="705.2" r="0.9" fill="#e8e8e8"/>
<path d="M139.7,722.9 V720.3 H154.9 V722.9" fill="none" stroke="#b8d8b8" stroke-width="1.6"/>
<path d="M139.7,731.9 V734.5 H154.9 V731.9" fill="none" stroke="#b8d8b8" stroke-width="1.6"/>
<path d="M139.7,727.5 Q147.3,721.1 154.9,727.5 Q147.3,733.9 139.7,727.5 Z" fill="#f4f4f4"/>
<circle cx="147.3" cy="727.5" r="3" fill="#141414"/>
<circle cx="148.2" cy="726.5" r="0.9" fill="#e8e8e8"/>
<path d="M139.7,744.4 V741.8 H154.9 V744.4" fill="none" stroke="#d0d0d0" stroke-width="1.6"/>
<path d="M139.7,753.4 V756.0 H154.9 V753.4" fill="none" stroke="#d0d0d0" stroke-width="1.6"/>
<path d="M139.7,749.0 Q147.3,742.6 154.9,749.0 Q147.3,755.4 139.7,749.0 Z" fill="#f4f4f4"/>
<circle cx="147.3" cy="749.0" r="3" fill="#141414"/>
<circle cx="148.2" cy="748.0" r="0.9" fill="#e8e8e8"/>
<path d="M139.7,765.6 V763.0 H154.9 V765.6" fill="none" stroke="#d0d0d0" stroke-width="1.6"/>
<path d="M139.7,774.6 V777.2 H154.9 V774.6" fill="none" stroke="#d0d0d0" stroke-width="1.6"/>
<path d="M139.7,770.2 Q147.3,763.8 154.9,770.2 Q147.3,776.6 139.7,770.2 Z" fill="#f4f4f4"/>
<circle cx="147.3" cy="770.2" r="3" fill="#141414"/>
<circle cx="148.2" cy="769.2" r="0.9" fill="#e8e8e8"/>
<text x="230" y="711.4" font-size="13" font-weight="bold" fill="#e8dc60" text-anchor="middle">1</text>
<text x="230" y="733" font-size="13" font-weight="bold" fill="#90d4a8" text-anchor="middle">2</text>
<g transform="translate(0,0.0)" fill="none" stroke-linecap="round">
<path d="M286.3,705.5 H297" stroke="#f0ecd0" stroke-width="1.4"/>
<path d="M299.5,701.8 L294.8,705.5 L299.5,709.2" stroke="#f0ecd0" stroke-width="1.4"/>
<path d="M297.6,699.6 V710.8" stroke="#ecd850" stroke-width="1.9"/>
<path d="M298.5,703.9 H310.5" stroke="#ecd850" stroke-width="2"/>
<path d="M298.5,707.3 H310.5" stroke="#f0ecd0" stroke-width="1.8"/>
<path d="M310.5,704 l1.8,1.6 l1.8,-1.6 l1.8,1.6 l1.5,-1.2" stroke="#f0ecd0" stroke-width="1.2"/>
<path d="M314.6,705.2 Q320.4,704.6 319.6,708.6 L314.6,712.7 H322" stroke="#f0ecd0" stroke-width="1.6"/>
</g>
<g transform="translate(0,21.3)" fill="none" stroke-linecap="round">
<path d="M286.3,705.5 H297" stroke="#c8ecd8" stroke-width="1.4"/>
<path d="M299.5,701.8 L294.8,705.5 L299.5,709.2" stroke="#c8ecd8" stroke-width="1.4"/>
<path d="M297.6,699.6 V710.8" stroke="#58c890" stroke-width="1.9"/>
<path d="M298.5,703.9 H310.5" stroke="#58c890" stroke-width="2"/>
<path d="M298.5,707.3 H310.5" stroke="#c8ecd8" stroke-width="1.8"/>
<path d="M310.5,704 l1.8,1.6 l1.8,-1.6 l1.8,1.6 l1.5,-1.2" stroke="#c8ecd8" stroke-width="1.2"/>
<path d="M314.6,705.2 Q320.4,704.6 319.6,708.6 L314.6,712.7 H322" stroke="#c8ecd8" stroke-width="1.6"/>
</g>
<text x="614.3" y="711.6" font-size="13.6" font-weight="bold" fill="#f0e0a0">10 V</text>
<text x="614.3" y="733.2" font-size="13.6" font-weight="bold" fill="#9adcb8">20 V</text>
<path d="M685.5,699 Q690,699 692,706 Q694,713 700,713" fill="none" stroke="#e8e8e8" stroke-width="1.5"/>
<line x1="818.6" y1="708.9" x2="840.7" y2="708.9" stroke="#c0c0b8" stroke-width="1.4" stroke-dasharray="3.2 1.2"/>
<line x1="906.0" y1="708.9" x2="933.0" y2="708.9" stroke="#e6d860" stroke-width="2.2" stroke-dasharray="3.2 1.2"/>
<line x1="998.0" y1="708.9" x2="1020.5" y2="708.9" stroke="#c0c0b8" stroke-width="1.4" stroke-dasharray="3.2 1.2"/>
<line x1="818.6" y1="730.0" x2="840.7" y2="730.0" stroke="#c4c4c4" stroke-width="1.4" stroke-dasharray="3.2 1.2"/>
<line x1="906.0" y1="730.0" x2="933.0" y2="730.0" stroke="#d0e8d8" stroke-width="2.2" stroke-dasharray="3.2 1.2"/>
<line x1="998.0" y1="730.0" x2="1020.5" y2="730.0" stroke="#c4c4c4" stroke-width="1.4" stroke-dasharray="3.2 1.2"/>
<line x1="818.6" y1="751.2" x2="840.7" y2="751.2" stroke="#3ab0d0" stroke-width="1.4" stroke-dasharray="3.2 1.2"/>
<line x1="906.0" y1="751.2" x2="933.0" y2="751.2" stroke="#30b4e0" stroke-width="2.2" stroke-dasharray="3.2 1.2"/>
<line x1="998.0" y1="751.2" x2="1020.5" y2="751.2" stroke="#3ab0d0" stroke-width="1.4" stroke-dasharray="3.2 1.2"/>
<text x="606.5" y="797.5" font-size="13.5" font-weight="bold" fill="#e8e8e8">500 ms</text>
<defs><pattern id="dots" x="0" y="0" width="3" height="3" patternUnits="userSpaceOnUse"><rect x="0" y="0" width="1.5" height="1.5" fill="#7d9cc4"/></pattern></defs>
<rect x="103" y="808" width="1429" height="2" fill="url(#dots)" opacity="0.9"/>
<rect x="103" y="859" width="1429" height="8" fill="url(#dots)" opacity="0.35"/>
<rect x="103" y="866.3" width="1429" height="1.4" fill="#1e2e44" opacity="0.6"/>
<rect x="125" y="832.5" width="3.2" height="14" fill="#2a5d86"/>
<rect x="148.5" y="832.5" width="3.2" height="14" fill="#2a5d86"/>
<path d="M132.5,829 Q138.3,825.5 144,829" fill="none" stroke="#2a5d86" stroke-width="2.4"/>
<circle cx="138.3" cy="838.8" r="8.4" fill="none" stroke="#2a5d86" stroke-width="2.2"/>
<circle cx="138.3" cy="838.8" r="4.6" fill="#2a5d86"/>
<rect x="201.8" y="830.4" width="16.3" height="15.4" fill="#fdfdfd"/>
<path d="M273,828 L292.2,838.6 L273,849.3 Z" fill="#245b84"/>
<circle cx="352.8" cy="837.7" r="8.8" fill="#245b84"/>
<text x="435.5" y="844.8" font-size="20" fill="#f4f4f4">00:10:500</text>
<path d="M555,838.4 L567,831.5 L567,845.3 Z M566.5,838.4 L578.6,831.5 L578.6,845.3 Z" fill="#245b84"/>
<path d="M632,838.4 L644.3,831 L644.3,845.5 Z" fill="#245b84"/>
<rect x="673" y="818.3" width="496" height="4.5" fill="#f6f2ec"/>
<path d="M712.3,811.5 L722.8,811.5 L722.8,826 L717.5,831.6 L712.3,826 Z" fill="#f4f4f4"/>
<line x1="678" y1="835.8" x2="1163.5" y2="835.8" stroke="#e8ecf2" stroke-width="3.4" stroke-dasharray="1.6 1.6"/>
<path d="M1197.4,831 L1210,838.2 L1197.4,845.5 Z" fill="#245b84"/>
<path d="M1263,831.3 L1275,838.2 L1263,845.2 Z M1274.5,831.3 L1286.8,838.2 L1274.5,845.2 Z" fill="#245b84"/>
<path d="M1337,828.8 L1345,828.8 L1337,836.8 Z" fill="#fff" stroke="#1c2c44" stroke-width="0.6"/>
<path d="M1355,847.3 L1347,847.3 L1355,839.3 Z" fill="#fff" stroke="#1c2c44" stroke-width="0.6"/>
<rect x="1341" y="833.3" width="9.6" height="9.4" fill="#fff" stroke="#1c2c44" stroke-width="1.1"/>
<text x="1426" y="846" font-size="17" fill="#7a6a78" opacity="0.75">x1</text>
<circle cx="1486" cy="834.8" r="6.8" fill="none" stroke="#2a5d86" stroke-width="2.4"/>
<line x1="1491" y1="840" x2="1499.5" y2="848.3" stroke="#2a5d86" stroke-width="3.6" stroke-linecap="round"/>
</svg>
<svg class="a" style="left:0;top:0" width="1559" height="941" viewBox="0 0 1559 941">
<line x1="113.0" y1="51.0" x2="136.6" y2="51.0" stroke="#ee2124" stroke-width="5.8"/>
<line x1="148.3" y1="51.0" x2="171.9" y2="51.0" stroke="#ee2124" stroke-width="5.8"/>
<line x1="183.6" y1="51.0" x2="207.2" y2="51.0" stroke="#ee2124" stroke-width="5.8"/>
<line x1="218.9" y1="51.0" x2="242.5" y2="51.0" stroke="#ee2124" stroke-width="5.8"/>
<line x1="254.2" y1="51.0" x2="277.8" y2="51.0" stroke="#ee2124" stroke-width="5.8"/>
<line x1="289.5" y1="51.0" x2="313.1" y2="51.0" stroke="#ee2124" stroke-width="5.8"/>
<line x1="324.8" y1="51.0" x2="348.4" y2="51.0" stroke="#ee2124" stroke-width="5.8"/>
<line x1="360.1" y1="51.0" x2="383.7" y2="51.0" stroke="#ee2124" stroke-width="5.8"/>
<line x1="395.4" y1="51.0" x2="419.0" y2="51.0" stroke="#ee2124" stroke-width="5.8"/>
<line x1="430.7" y1="51.0" x2="454.3" y2="51.0" stroke="#ee2124" stroke-width="5.8"/>
<line x1="466.0" y1="51.0" x2="489.6" y2="51.0" stroke="#ee2124" stroke-width="5.8"/>
<line x1="501.3" y1="51.0" x2="524.9" y2="51.0" stroke="#ee2124" stroke-width="5.8"/>
<line x1="536.6" y1="51.0" x2="560.2" y2="51.0" stroke="#ee2124" stroke-width="5.8"/>
<line x1="571.9" y1="51.0" x2="595.5" y2="51.0" stroke="#ee2124" stroke-width="5.8"/>
<line x1="607.2" y1="51.0" x2="630.8" y2="51.0" stroke="#ee2124" stroke-width="5.8"/>
<line x1="642.5" y1="51.0" x2="666.1" y2="51.0" stroke="#ee2124" stroke-width="5.8"/>
<line x1="677.8" y1="51.0" x2="701.0" y2="51.0" stroke="#ee2124" stroke-width="5.8"/>
<path d="M712,51 L710,51 A8,8 0 0 1 718,59 L718,70" fill="none" stroke="#ee2124" stroke-width="5.8"/>
<path d="M718,82 L718,88 A8,8 0 0 1 710,96 L695,96" fill="none" stroke="#ee2124" stroke-width="5.8"/>
<line x1="131.0" y1="96.0" x2="155.0" y2="96.0" stroke="#ee2124" stroke-width="5.8"/>
<line x1="166.3" y1="96.0" x2="190.3" y2="96.0" stroke="#ee2124" stroke-width="5.8"/>
<line x1="201.6" y1="96.0" x2="225.6" y2="96.0" stroke="#ee2124" stroke-width="5.8"/>
<line x1="236.9" y1="96.0" x2="260.9" y2="96.0" stroke="#ee2124" stroke-width="5.8"/>
<line x1="272.2" y1="96.0" x2="296.2" y2="96.0" stroke="#ee2124" stroke-width="5.8"/>
<line x1="307.5" y1="96.0" x2="331.5" y2="96.0" stroke="#ee2124" stroke-width="5.8"/>
<line x1="342.8" y1="96.0" x2="366.8" y2="96.0" stroke="#ee2124" stroke-width="5.8"/>
<line x1="378.1" y1="96.0" x2="402.1" y2="96.0" stroke="#ee2124" stroke-width="5.8"/>
<line x1="413.4" y1="96.0" x2="437.4" y2="96.0" stroke="#ee2124" stroke-width="5.8"/>
<line x1="448.7" y1="96.0" x2="472.7" y2="96.0" stroke="#ee2124" stroke-width="5.8"/>
<line x1="484.0" y1="96.0" x2="508.0" y2="96.0" stroke="#ee2124" stroke-width="5.8"/>
<line x1="519.3" y1="96.0" x2="543.3" y2="96.0" stroke="#ee2124" stroke-width="5.8"/>
<line x1="554.6" y1="96.0" x2="578.6" y2="96.0" stroke="#ee2124" stroke-width="5.8"/>
<line x1="589.9" y1="96.0" x2="613.9" y2="96.0" stroke="#ee2124" stroke-width="5.8"/>
<line x1="625.2" y1="96.0" x2="649.2" y2="96.0" stroke="#ee2124" stroke-width="5.8"/>
<line x1="660.5" y1="96.0" x2="684.0" y2="96.0" stroke="#ee2124" stroke-width="5.8"/>
<line x1="102.0" y1="53.0" x2="102.0" y2="77.0" stroke="#ee2124" stroke-width="5.8"/>
<path d="M102,88 L102,88 A8,8 0 0 0 110,96 L119,96" fill="none" stroke="#ee2124" stroke-width="5.8"/>
<line x1="143.6" y1="649.3" x2="170.6" y2="649.3" stroke="#ee2124" stroke-width="6.6"/>
<line x1="183.8" y1="649.3" x2="210.8" y2="649.3" stroke="#ee2124" stroke-width="6.6"/>
<line x1="223.9" y1="649.3" x2="250.9" y2="649.3" stroke="#ee2124" stroke-width="6.6"/>
<line x1="264.1" y1="649.3" x2="291.1" y2="649.3" stroke="#ee2124" stroke-width="6.6"/>
<line x1="304.2" y1="649.3" x2="331.2" y2="649.3" stroke="#ee2124" stroke-width="6.6"/>
<line x1="344.3" y1="649.3" x2="371.3" y2="649.3" stroke="#ee2124" stroke-width="6.6"/>
<line x1="384.5" y1="649.3" x2="411.5" y2="649.3" stroke="#ee2124" stroke-width="6.6"/>
<line x1="424.6" y1="649.3" x2="451.6" y2="649.3" stroke="#ee2124" stroke-width="6.6"/>
<line x1="464.8" y1="649.3" x2="491.8" y2="649.3" stroke="#ee2124" stroke-width="6.6"/>
<line x1="504.9" y1="649.3" x2="531.9" y2="649.3" stroke="#ee2124" stroke-width="6.6"/>
<line x1="545.1" y1="649.3" x2="572.1" y2="649.3" stroke="#ee2124" stroke-width="6.6"/>
<line x1="585.2" y1="649.3" x2="612.2" y2="649.3" stroke="#ee2124" stroke-width="6.6"/>
<line x1="625.4" y1="649.3" x2="652.4" y2="649.3" stroke="#ee2124" stroke-width="6.6"/>
<line x1="665.5" y1="649.3" x2="692.5" y2="649.3" stroke="#ee2124" stroke-width="6.6"/>
<line x1="705.7" y1="649.3" x2="732.7" y2="649.3" stroke="#ee2124" stroke-width="6.6"/>
<line x1="745.8" y1="649.3" x2="772.8" y2="649.3" stroke="#ee2124" stroke-width="6.6"/>
<line x1="786.0" y1="649.3" x2="813.0" y2="649.3" stroke="#ee2124" stroke-width="6.6"/>
<line x1="826.1" y1="649.3" x2="853.1" y2="649.3" stroke="#ee2124" stroke-width="6.6"/>
<line x1="866.3" y1="649.3" x2="893.3" y2="649.3" stroke="#ee2124" stroke-width="6.6"/>
<line x1="906.4" y1="649.3" x2="933.4" y2="649.3" stroke="#ee2124" stroke-width="6.6"/>
<line x1="946.6" y1="649.3" x2="973.6" y2="649.3" stroke="#ee2124" stroke-width="6.6"/>
<line x1="986.7" y1="649.3" x2="1013.7" y2="649.3" stroke="#ee2124" stroke-width="6.6"/>
<line x1="1026.9" y1="649.3" x2="1053.9" y2="649.3" stroke="#ee2124" stroke-width="6.6"/>
<line x1="1067.0" y1="649.3" x2="1094.0" y2="649.3" stroke="#ee2124" stroke-width="6.6"/>
<line x1="1107.2" y1="649.3" x2="1134.2" y2="649.3" stroke="#ee2124" stroke-width="6.6"/>
<line x1="1147.3" y1="649.3" x2="1174.3" y2="649.3" stroke="#ee2124" stroke-width="6.6"/>
<line x1="1187.5" y1="649.3" x2="1214.5" y2="649.3" stroke="#ee2124" stroke-width="6.6"/>
<line x1="1227.7" y1="649.3" x2="1254.7" y2="649.3" stroke="#ee2124" stroke-width="6.6"/>
<line x1="1267.8" y1="649.3" x2="1294.8" y2="649.3" stroke="#ee2124" stroke-width="6.6"/>
<line x1="1308.0" y1="649.3" x2="1335.0" y2="649.3" stroke="#ee2124" stroke-width="6.6"/>
<line x1="1348.1" y1="649.3" x2="1375.1" y2="649.3" stroke="#ee2124" stroke-width="6.6"/>
<line x1="1388.3" y1="649.3" x2="1415.3" y2="649.3" stroke="#ee2124" stroke-width="6.6"/>
<line x1="1428.4" y1="649.3" x2="1455.4" y2="649.3" stroke="#ee2124" stroke-width="6.6"/>
<line x1="1468.6" y1="649.3" x2="1495.6" y2="649.3" stroke="#ee2124" stroke-width="6.6"/>
<path d="M102.5,655 A28,9 0 0 1 130.5,649.3 L129.7,649.3" fill="none" stroke="#ee2124" stroke-width="6.6"/>
<path d="M1509.3,649.3 L1509.0,649.3 A22,11 0 0 1 1531.0,660.3 L1531.0,660" fill="none" stroke="#ee2124" stroke-width="6.6"/>
<line x1="1531.0" y1="672.0" x2="1531.0" y2="699.8" stroke="#ee2124" stroke-width="6.6"/>
<line x1="1531.0" y1="712.1" x2="1531.0" y2="739.9" stroke="#ee2124" stroke-width="6.6"/>
<line x1="1531.0" y1="752.3" x2="1531.0" y2="780.1" stroke="#ee2124" stroke-width="6.6"/>
<path d="M1531.0,787.6 A22,8 0 0 1 1509.0,794.3 L1506.4,794.3" fill="none" stroke="#ee2124" stroke-width="6.6"/>
<line x1="141.2" y1="794.3" x2="167.7" y2="794.3" stroke="#ee2124" stroke-width="6.6"/>
<line x1="181.3" y1="794.3" x2="207.8" y2="794.3" stroke="#ee2124" stroke-width="6.6"/>
<line x1="221.4" y1="794.3" x2="247.9" y2="794.3" stroke="#ee2124" stroke-width="6.6"/>
<line x1="261.5" y1="794.3" x2="288.0" y2="794.3" stroke="#ee2124" stroke-width="6.6"/>
<line x1="301.6" y1="794.3" x2="328.1" y2="794.3" stroke="#ee2124" stroke-width="6.6"/>
<line x1="341.7" y1="794.3" x2="368.2" y2="794.3" stroke="#ee2124" stroke-width="6.6"/>
<line x1="381.8" y1="794.3" x2="408.3" y2="794.3" stroke="#ee2124" stroke-width="6.6"/>
<line x1="421.9" y1="794.3" x2="448.4" y2="794.3" stroke="#ee2124" stroke-width="6.6"/>
<line x1="462.0" y1="794.3" x2="488.5" y2="794.3" stroke="#ee2124" stroke-width="6.6"/>
<line x1="502.1" y1="794.3" x2="528.6" y2="794.3" stroke="#ee2124" stroke-width="6.6"/>
<line x1="542.2" y1="794.3" x2="568.7" y2="794.3" stroke="#ee2124" stroke-width="6.6"/>
<line x1="582.3" y1="794.3" x2="608.8" y2="794.3" stroke="#ee2124" stroke-width="6.6"/>
<line x1="622.4" y1="794.3" x2="648.9" y2="794.3" stroke="#ee2124" stroke-width="6.6"/>
<line x1="662.5" y1="794.3" x2="689.0" y2="794.3" stroke="#ee2124" stroke-width="6.6"/>
<line x1="702.6" y1="794.3" x2="729.1" y2="794.3" stroke="#ee2124" stroke-width="6.6"/>
<line x1="742.7" y1="794.3" x2="769.2" y2="794.3" stroke="#ee2124" stroke-width="6.6"/>
<line x1="782.8" y1="794.3" x2="809.3" y2="794.3" stroke="#ee2124" stroke-width="6.6"/>
<line x1="822.9" y1="794.3" x2="849.4" y2="794.3" stroke="#ee2124" stroke-width="6.6"/>
<line x1="863.0" y1="794.3" x2="889.5" y2="794.3" stroke="#ee2124" stroke-width="6.6"/>
<line x1="903.1" y1="794.3" x2="929.6" y2="794.3" stroke="#ee2124" stroke-width="6.6"/>
<line x1="943.2" y1="794.3" x2="969.7" y2="794.3" stroke="#ee2124" stroke-width="6.6"/>
<line x1="983.3" y1="794.3" x2="1009.8" y2="794.3" stroke="#ee2124" stroke-width="6.6"/>
<line x1="1023.4" y1="794.3" x2="1049.9" y2="794.3" stroke="#ee2124" stroke-width="6.6"/>
<line x1="1063.5" y1="794.3" x2="1090.0" y2="794.3" stroke="#ee2124" stroke-width="6.6"/>
<line x1="1103.6" y1="794.3" x2="1130.1" y2="794.3" stroke="#ee2124" stroke-width="6.6"/>
<line x1="1143.7" y1="794.3" x2="1170.2" y2="794.3" stroke="#ee2124" stroke-width="6.6"/>
<line x1="1183.8" y1="794.3" x2="1210.3" y2="794.3" stroke="#ee2124" stroke-width="6.6"/>
<line x1="1223.9" y1="794.3" x2="1250.4" y2="794.3" stroke="#ee2124" stroke-width="6.6"/>
<line x1="1264.0" y1="794.3" x2="1290.5" y2="794.3" stroke="#ee2124" stroke-width="6.6"/>
<line x1="1304.1" y1="794.3" x2="1330.6" y2="794.3" stroke="#ee2124" stroke-width="6.6"/>
<line x1="1344.2" y1="794.3" x2="1370.7" y2="794.3" stroke="#ee2124" stroke-width="6.6"/>
<line x1="1384.3" y1="794.3" x2="1410.8" y2="794.3" stroke="#ee2124" stroke-width="6.6"/>
<line x1="1424.4" y1="794.3" x2="1450.9" y2="794.3" stroke="#ee2124" stroke-width="6.6"/>
<line x1="1464.5" y1="794.3" x2="1491.0" y2="794.3" stroke="#ee2124" stroke-width="6.6"/>
<line x1="102.5" y1="667.0" x2="102.5" y2="693.8" stroke="#ee2124" stroke-width="6.6"/>
<line x1="102.5" y1="707.1" x2="102.5" y2="733.9" stroke="#ee2124" stroke-width="6.6"/>
<line x1="102.5" y1="747.3" x2="102.5" y2="774.1" stroke="#ee2124" stroke-width="6.6"/>
<path d="M102.5,788 A24,7 0 0 0 126.5,794.3 L127.2,794.3" fill="none" stroke="#ee2124" stroke-width="6.6"/>
<line x1="115.2" y1="810.5" x2="139.8" y2="810.5" stroke="#ee2124" stroke-width="5.6"/>
<line x1="152.7" y1="810.5" x2="177.3" y2="810.5" stroke="#ee2124" stroke-width="5.6"/>
<line x1="190.1" y1="810.5" x2="214.7" y2="810.5" stroke="#ee2124" stroke-width="5.6"/>
<line x1="227.6" y1="810.5" x2="252.2" y2="810.5" stroke="#ee2124" stroke-width="5.6"/>
<line x1="265.0" y1="810.5" x2="289.6" y2="810.5" stroke="#ee2124" stroke-width="5.6"/>
<line x1="302.5" y1="810.5" x2="327.1" y2="810.5" stroke="#ee2124" stroke-width="5.6"/>
<line x1="340.0" y1="810.5" x2="364.6" y2="810.5" stroke="#ee2124" stroke-width="5.6"/>
<line x1="377.4" y1="810.5" x2="402.0" y2="810.5" stroke="#ee2124" stroke-width="5.6"/>
<line x1="414.9" y1="810.5" x2="439.5" y2="810.5" stroke="#ee2124" stroke-width="5.6"/>
<line x1="452.3" y1="810.5" x2="476.9" y2="810.5" stroke="#ee2124" stroke-width="5.6"/>
<line x1="489.8" y1="810.5" x2="514.4" y2="810.5" stroke="#ee2124" stroke-width="5.6"/>
<line x1="527.3" y1="810.5" x2="551.9" y2="810.5" stroke="#ee2124" stroke-width="5.6"/>
<line x1="564.7" y1="810.5" x2="589.3" y2="810.5" stroke="#ee2124" stroke-width="5.6"/>
<line x1="602.2" y1="810.5" x2="626.8" y2="810.5" stroke="#ee2124" stroke-width="5.6"/>
<line x1="639.6" y1="810.5" x2="664.2" y2="810.5" stroke="#ee2124" stroke-width="5.6"/>
<line x1="677.1" y1="810.5" x2="701.7" y2="810.5" stroke="#ee2124" stroke-width="5.6"/>
<line x1="714.6" y1="810.5" x2="739.2" y2="810.5" stroke="#ee2124" stroke-width="5.6"/>
<line x1="752.0" y1="810.5" x2="776.6" y2="810.5" stroke="#ee2124" stroke-width="5.6"/>
<line x1="789.5" y1="810.5" x2="814.1" y2="810.5" stroke="#ee2124" stroke-width="5.6"/>
<line x1="826.9" y1="810.5" x2="851.5" y2="810.5" stroke="#ee2124" stroke-width="5.6"/>
<line x1="864.4" y1="810.5" x2="889.0" y2="810.5" stroke="#ee2124" stroke-width="5.6"/>
<line x1="901.9" y1="810.5" x2="926.5" y2="810.5" stroke="#ee2124" stroke-width="5.6"/>
<line x1="939.3" y1="810.5" x2="963.9" y2="810.5" stroke="#ee2124" stroke-width="5.6"/>
<line x1="976.8" y1="810.5" x2="1001.4" y2="810.5" stroke="#ee2124" stroke-width="5.6"/>
<line x1="1014.2" y1="810.5" x2="1038.8" y2="810.5" stroke="#ee2124" stroke-width="5.6"/>
<line x1="1051.7" y1="810.5" x2="1076.3" y2="810.5" stroke="#ee2124" stroke-width="5.6"/>
<line x1="1089.2" y1="810.5" x2="1113.8" y2="810.5" stroke="#ee2124" stroke-width="5.6"/>
<line x1="1126.6" y1="810.5" x2="1151.2" y2="810.5" stroke="#ee2124" stroke-width="5.6"/>
<line x1="1164.1" y1="810.5" x2="1188.7" y2="810.5" stroke="#ee2124" stroke-width="5.6"/>
<line x1="1201.5" y1="810.5" x2="1226.1" y2="810.5" stroke="#ee2124" stroke-width="5.6"/>
<line x1="1239.0" y1="810.5" x2="1263.6" y2="810.5" stroke="#ee2124" stroke-width="5.6"/>
<line x1="1276.5" y1="810.5" x2="1301.1" y2="810.5" stroke="#ee2124" stroke-width="5.6"/>
<line x1="1313.9" y1="810.5" x2="1338.5" y2="810.5" stroke="#ee2124" stroke-width="5.6"/>
<line x1="1351.4" y1="810.5" x2="1376.0" y2="810.5" stroke="#ee2124" stroke-width="5.6"/>
<line x1="1388.8" y1="810.5" x2="1413.4" y2="810.5" stroke="#ee2124" stroke-width="5.6"/>
<line x1="1426.3" y1="810.5" x2="1450.9" y2="810.5" stroke="#ee2124" stroke-width="5.6"/>
<line x1="1463.8" y1="810.5" x2="1488.4" y2="810.5" stroke="#ee2124" stroke-width="5.6"/>
<line x1="1502.2" y1="810.5" x2="1528.5" y2="810.5" stroke="#ee2124" stroke-width="5.6"/>
<line x1="1532.3" y1="818.8" x2="1532.3" y2="844.0" stroke="#ee2124" stroke-width="5.6"/>
<path d="M1532.3,857.5 L1532.3,862.3 A8,8 0 0 1 1524.3,870.3 L1508,870.3" fill="none" stroke="#ee2124" stroke-width="5.6"/>
<line x1="121.0" y1="870.3" x2="145.6" y2="870.3" stroke="#ee2124" stroke-width="5.6"/>
<line x1="158.5" y1="870.3" x2="183.1" y2="870.3" stroke="#ee2124" stroke-width="5.6"/>
<line x1="196.0" y1="870.3" x2="220.6" y2="870.3" stroke="#ee2124" stroke-width="5.6"/>
<line x1="233.5" y1="870.3" x2="258.1" y2="870.3" stroke="#ee2124" stroke-width="5.6"/>
<line x1="271.0" y1="870.3" x2="295.6" y2="870.3" stroke="#ee2124" stroke-width="5.6"/>
<line x1="308.5" y1="870.3" x2="333.1" y2="870.3" stroke="#ee2124" stroke-width="5.6"/>
<line x1="346.0" y1="870.3" x2="370.6" y2="870.3" stroke="#ee2124" stroke-width="5.6"/>
<line x1="383.5" y1="870.3" x2="408.1" y2="870.3" stroke="#ee2124" stroke-width="5.6"/>
<line x1="421.0" y1="870.3" x2="445.6" y2="870.3" stroke="#ee2124" stroke-width="5.6"/>
<line x1="458.5" y1="870.3" x2="483.1" y2="870.3" stroke="#ee2124" stroke-width="5.6"/>
<line x1="496.0" y1="870.3" x2="520.6" y2="870.3" stroke="#ee2124" stroke-width="5.6"/>
<line x1="533.5" y1="870.3" x2="558.1" y2="870.3" stroke="#ee2124" stroke-width="5.6"/>
<line x1="571.0" y1="870.3" x2="595.6" y2="870.3" stroke="#ee2124" stroke-width="5.6"/>
<line x1="608.5" y1="870.3" x2="633.1" y2="870.3" stroke="#ee2124" stroke-width="5.6"/>
<line x1="646.0" y1="870.3" x2="670.6" y2="870.3" stroke="#ee2124" stroke-width="5.6"/>
<line x1="683.5" y1="870.3" x2="708.1" y2="870.3" stroke="#ee2124" stroke-width="5.6"/>
<line x1="721.0" y1="870.3" x2="745.6" y2="870.3" stroke="#ee2124" stroke-width="5.6"/>
<line x1="758.5" y1="870.3" x2="783.1" y2="870.3" stroke="#ee2124" stroke-width="5.6"/>
<line x1="796.0" y1="870.3" x2="820.6" y2="870.3" stroke="#ee2124" stroke-width="5.6"/>
<line x1="833.5" y1="870.3" x2="858.1" y2="870.3" stroke="#ee2124" stroke-width="5.6"/>
<line x1="871.0" y1="870.3" x2="895.6" y2="870.3" stroke="#ee2124" stroke-width="5.6"/>
<line x1="908.5" y1="870.3" x2="933.1" y2="870.3" stroke="#ee2124" stroke-width="5.6"/>
<line x1="946.0" y1="870.3" x2="970.6" y2="870.3" stroke="#ee2124" stroke-width="5.6"/>
<line x1="983.5" y1="870.3" x2="1008.1" y2="870.3" stroke="#ee2124" stroke-width="5.6"/>
<line x1="1021.0" y1="870.3" x2="1045.6" y2="870.3" stroke="#ee2124" stroke-width="5.6"/>
<line x1="1058.5" y1="870.3" x2="1083.1" y2="870.3" stroke="#ee2124" stroke-width="5.6"/>
<line x1="1096.0" y1="870.3" x2="1120.6" y2="870.3" stroke="#ee2124" stroke-width="5.6"/>
<line x1="1133.5" y1="870.3" x2="1158.1" y2="870.3" stroke="#ee2124" stroke-width="5.6"/>
<line x1="1171.0" y1="870.3" x2="1195.6" y2="870.3" stroke="#ee2124" stroke-width="5.6"/>
<line x1="1208.5" y1="870.3" x2="1233.1" y2="870.3" stroke="#ee2124" stroke-width="5.6"/>
<line x1="1246.0" y1="870.3" x2="1270.6" y2="870.3" stroke="#ee2124" stroke-width="5.6"/>
<line x1="1283.5" y1="870.3" x2="1308.1" y2="870.3" stroke="#ee2124" stroke-width="5.6"/>
<line x1="1321.0" y1="870.3" x2="1345.6" y2="870.3" stroke="#ee2124" stroke-width="5.6"/>
<line x1="1358.5" y1="870.3" x2="1383.1" y2="870.3" stroke="#ee2124" stroke-width="5.6"/>
<line x1="1396.0" y1="870.3" x2="1420.6" y2="870.3" stroke="#ee2124" stroke-width="5.6"/>
<line x1="1433.5" y1="870.3" x2="1458.1" y2="870.3" stroke="#ee2124" stroke-width="5.6"/>
<line x1="1471.0" y1="870.3" x2="1495.6" y2="870.3" stroke="#ee2124" stroke-width="5.6"/>
<path d="M98.2,837 L98.2,812.5 L100.5,809.8 L104.6,809.8 L104.6,837 Z" fill="#ee2124"/>
<path d="M101.5,849.3 L101.5,862.3 A8,8 0 0 0 109.5,870.3 L108.3,870.3" fill="none" stroke="#ee2124" stroke-width="6.4"/>
<line x1="55.0" y1="46.5" x2="101.5" y2="76.5" stroke="#fff" stroke-width="10"/>
<line x1="55.0" y1="46.5" x2="101.5" y2="76.5" stroke="#231f20" stroke-width="3.4"/>
<line x1="43.0" y1="327.0" x2="102.0" y2="122.0" stroke="#fff" stroke-width="10"/>
<line x1="43.0" y1="327.0" x2="102.0" y2="122.0" stroke="#231f20" stroke-width="3.4"/>
<line x1="40.0" y1="388.0" x2="99.5" y2="606.0" stroke="#fff" stroke-width="10"/>
<line x1="40.0" y1="388.0" x2="99.5" y2="606.0" stroke="#231f20" stroke-width="3.4"/>
<line x1="55.0" y1="687.3" x2="101.5" y2="716.3" stroke="#fff" stroke-width="10"/>
<line x1="55.0" y1="687.3" x2="101.5" y2="716.3" stroke="#231f20" stroke-width="3.4"/>
<line x1="55.0" y1="807.2" x2="99.2" y2="835.2" stroke="#fff" stroke-width="10"/>
<line x1="55.0" y1="807.2" x2="99.2" y2="835.2" stroke="#231f20" stroke-width="3.4"/>
<circle cx="31" cy="31" r="28.2" fill="#fff"/>
<path d="M35.6,15 L35.6,45 L28.2,45 L28.2,25.2 L21.7,25.2 L21.7,20.2 Q27,20 28.6,15 Z" fill="#231f20"/>
<circle cx="31" cy="357" r="28.2" fill="#fff"/>
<text x="31" y="371.3" font-size="42" font-weight="bold" fill="#231f20" stroke="#231f20" stroke-width="0.9" text-anchor="middle">2</text>
<circle cx="31" cy="671" r="28.2" fill="#fff"/>
<text x="31" y="685.3" font-size="42" font-weight="bold" fill="#231f20" stroke="#231f20" stroke-width="0.9" text-anchor="middle">3</text>
<circle cx="31" cy="791" r="28.2" fill="#fff"/>
<text x="31" y="805.3" font-size="42" font-weight="bold" fill="#231f20" stroke="#231f20" stroke-width="0.9" text-anchor="middle">4</text>
</svg>
</body></html>
